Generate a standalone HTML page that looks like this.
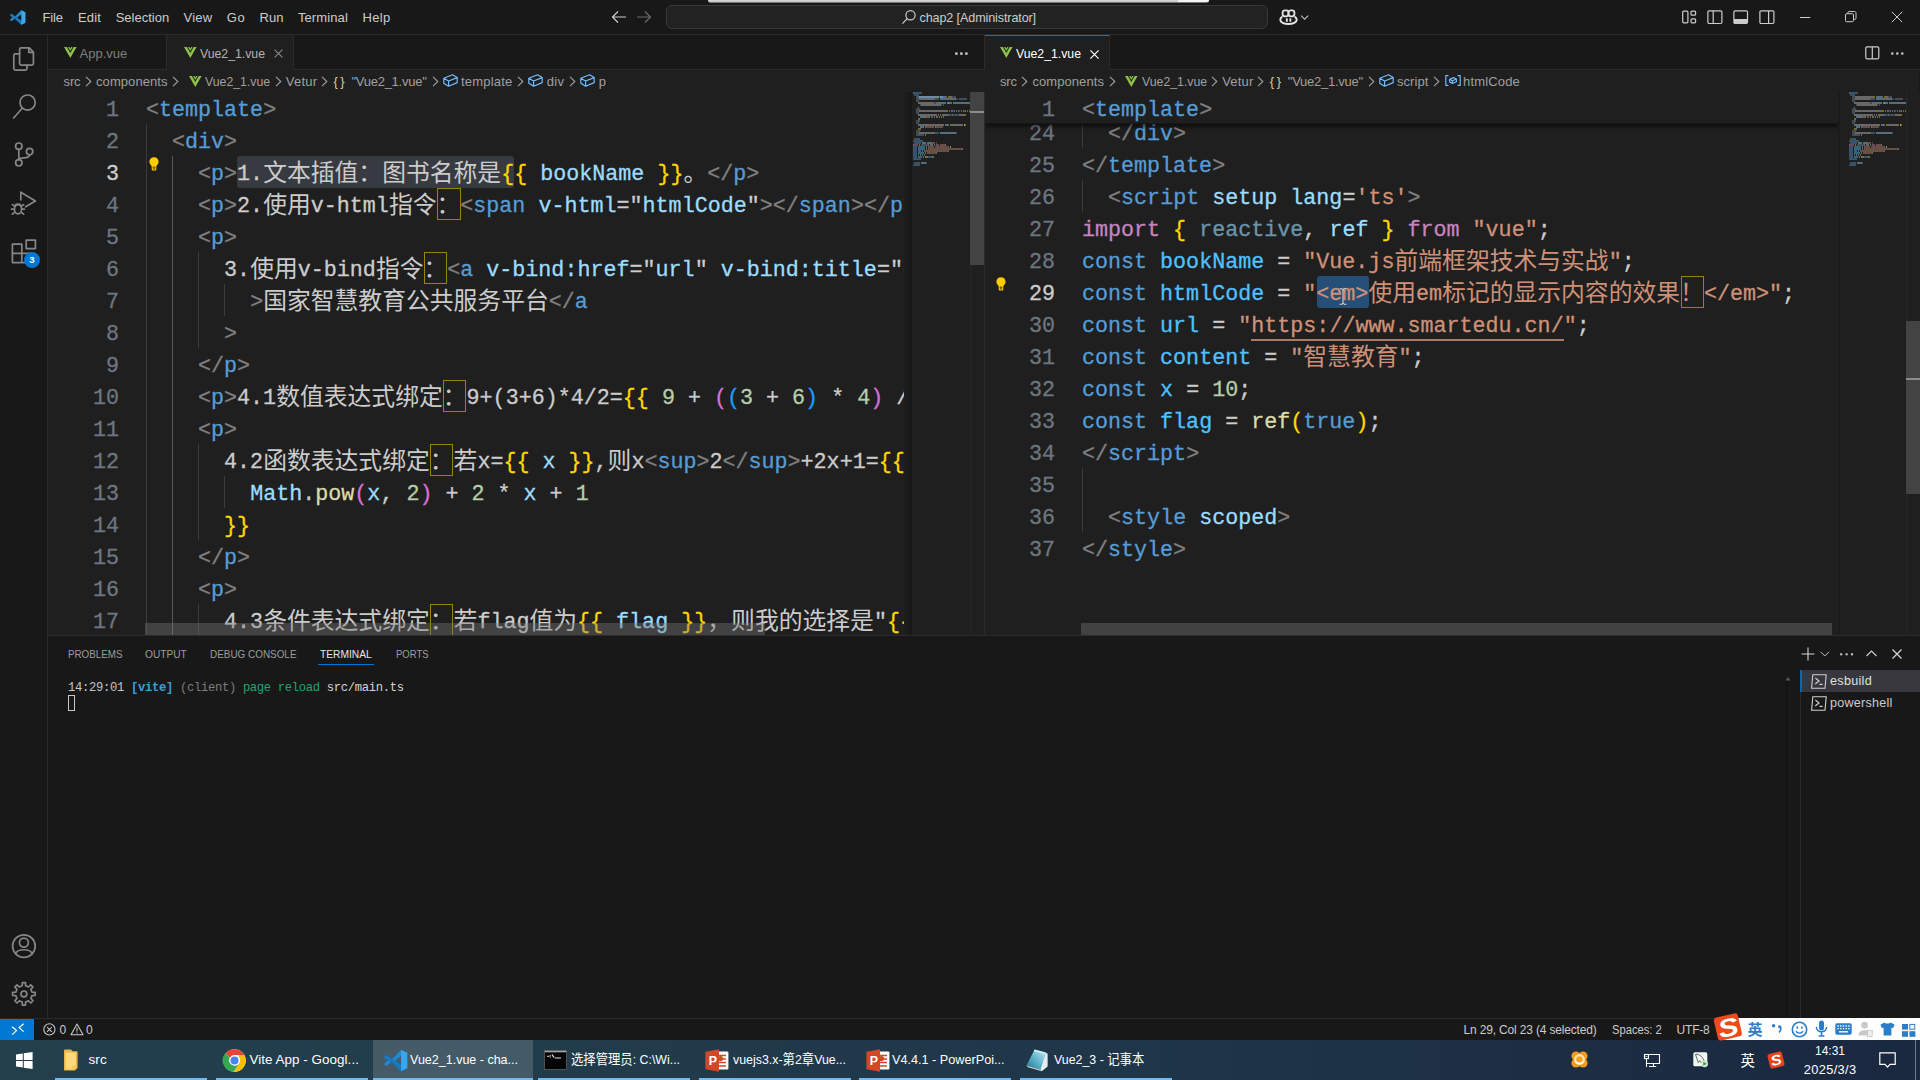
<!DOCTYPE html>
<html lang="zh">
<head>
<meta charset="utf-8">
<title>Vue2_1.vue - chap2 [Administrator] - Visual Studio Code</title>
<style>
*{box-sizing:border-box;margin:0;padding:0}
html,body{width:1920px;height:1080px;overflow:hidden;background:#181818}
body{position:relative;font-family:"Liberation Sans","Noto Sans CJK SC",sans-serif;color:#ccc;font-size:13px}
svg{position:absolute;overflow:visible}
.t{position:absolute;white-space:nowrap;display:block}
/* ---------- title bar ---------- */
#titlebar{position:absolute;left:0;top:0;width:1920px;height:35px;background:#181818;border-bottom:1px solid #2b2b2b}
#titlebar .m{top:0;height:34px;line-height:35px;font-size:13px;color:#ccc}
#cmdcenter{position:absolute;left:666px;top:5px;width:602px;height:24px;border:1px solid #383838;border-radius:6px;background:#222222}
#topstrip{position:absolute;left:708px;top:0;width:501px;height:3px;background:linear-gradient(180deg,#dcdcdc 0,#c4c4c4 55%,#4a4a4a 100%);border-radius:0 0 3px 3px}
/* ---------- activity bar ---------- */
#activity{position:absolute;left:0;top:35px;width:48px;height:983px;background:#181818;border-right:1px solid #2b2b2b}
/* ---------- editor groups ---------- */
.tabs{position:absolute;top:35px;height:35px;background:#181818;border-bottom:1px solid #2b2b2b}
.tab{position:absolute;top:0;height:35px;border-right:1px solid #2b2b2b;border-bottom:1px solid #2b2b2b}
.tab.on{background:#1f1f1f;border-bottom-color:#1f1f1f}
.tab .t{top:1px;height:34px;line-height:35px;font-size:13px}
.crumbs{position:absolute;top:70px;height:22px;background:#1f1f1f;color:#a0a0a0}
.crumbs .t{top:1px;height:22px;line-height:22px;font-size:13px}
.editor{position:absolute;top:92px;height:543px;background:#1f1f1f;overflow:hidden}
.code{position:absolute;left:0;top:0;height:543px;overflow:hidden}
.ln{position:absolute;left:0;height:32px;width:100%}
.ln .n,.ln .c{position:absolute;top:2.5px;-webkit-text-stroke:.3px currentColor;height:32px;line-height:32px;white-space:pre;font-family:"Liberation Mono","Noto Sans CJK SC",monospace;font-size:21.7px}
.ln .n{left:0;text-align:right;color:#6e7681}
.ln .n.cur{color:#ccc}
.ln .c.zh{font-family:"Noto Sans CJK SC","Liberation Mono",sans-serif;font-size:23.8px;top:-1px;-webkit-text-stroke:0}
.g{color:#808080}.b{color:#569cd6}.lb{color:#9cdcfe}.y{color:#ffd700}.p{color:#da70d6}.bl{color:#179fff}
.s{color:#ce9178}.num{color:#b5cea8}.kw{color:#c586c0}.fn{color:#dcdcaa}.w{color:#cccccc}.cn{color:#4fc1ff}.dim{color:#9cdcfe;opacity:.62}
.guide{position:absolute;width:1px;background:#3b3b3b}
.ubox{position:absolute;border:1px solid rgba(189,155,3,.8);height:32px}
.mm{position:absolute;top:0;height:543px;background:#1f1f1f}
.mm i{position:absolute;height:2px;display:block;opacity:.42}
.sb{position:absolute;top:0;width:14px;height:543px;background:#1f1f1f;border-left:1px solid #272727}
/* ---------- panel ---------- */
#panel{position:absolute;left:48px;top:635px;width:1872px;height:383px;background:#181818;border-top:1px solid #2b2b2b}
#panel .pt{top:7px;height:22px;line-height:22px;font-size:11px;color:#9d9d9d}
#panel .term{font-family:"Liberation Mono",monospace;font-size:12.2px;letter-spacing:-0.32px;height:17px;line-height:17px;white-space:pre}
/* ---------- status bar ---------- */
#status{position:absolute;left:0;top:1018px;width:1920px;height:22px;background:#181818;border-top:1px solid #2b2b2b;color:#ccc}
#status .t{top:1px;height:21px;line-height:21px;font-size:12px}
/* ---------- taskbar ---------- */
#taskbar{position:absolute;left:0;top:1040px;width:1920px;height:40px;background:linear-gradient(90deg,#233f4c 0%,#213b4b 35%,#1f3548 60%,#1c2e44 80%,#1a2840 100%);color:#fff}
#taskbar .t{top:0;height:40px;line-height:39px;font-size:13.4px;color:#fff}
#taskbar .ul{position:absolute;top:38px;height:2px;background:#76b9ed}
#ime{position:absolute;left:1720px;top:1018px;width:200px;height:22px;background:#fff}
</style>
</head>
<body>
<div id="titlebar">
  <svg style="left:9px;top:9px" width="17" height="17" viewBox="0 0 100 100"><path fill="#2489ca" d="M5 36 L14 28 L35 44 L72 8 L96 19 V81 L72 92 L35 56 L14 72 L5 64 L20 50 Z"/><path fill="#1070b3" d="M5 36 L14 28 L96 81 L72 92 Z" opacity=".55"/><path fill="#3ba8ec" d="M72 8 L96 19 V81 L72 92 Z"/><path fill="#181818" d="M72 32 V68 L48 50 Z"/></svg>
  <span class="t m" style="left:42.4px;letter-spacing:-0.09px">File</span>
  <span class="t m" style="left:78.1px;letter-spacing:0.10px">Edit</span>
  <span class="t m" style="left:115.7px;letter-spacing:0.00px">Selection</span>
  <span class="t m" style="left:183.5px;letter-spacing:0.26px">View</span>
  <span class="t m" style="left:226.8px;letter-spacing:0.48px">Go</span>
  <span class="t m" style="left:259.6px;letter-spacing:-0.02px">Run</span>
  <span class="t m" style="left:297.9px;letter-spacing:0.11px">Terminal</span>
  <span class="t m" style="left:362.5px;letter-spacing:0.31px">Help</span>
  <!-- nav arrows -->
  <svg style="left:611px;top:10px" width="16" height="14" viewBox="0 0 16 14"><path d="M7 1.5 L1.5 7 L7 12.5 M1.5 7 H15" fill="none" stroke="#ccc" stroke-width="1.2"/></svg>
  <svg style="left:636px;top:10px" width="16" height="14" viewBox="0 0 16 14"><path d="M9 1.5 L14.5 7 L9 12.5 M14.5 7 H1" fill="none" stroke="#6b6b6b" stroke-width="1.2"/></svg>
  <div id="cmdcenter">
    <svg style="left:234px;top:3px" width="16" height="16" viewBox="0 0 16 16"><circle cx="9.5" cy="6.3" r="4.6" fill="none" stroke="#ccc" stroke-width="1.2"/><path d="M6.2 9.6 L1.4 14.6" stroke="#ccc" stroke-width="1.3" fill="none"/></svg>
    <span class="t" style="left:252.5px;top:1px;height:22px;line-height:23px;font-size:12.6px;color:#ccc;letter-spacing:-0.12px">chap2 [Administrator]</span>
  </div>
  <!-- copilot -->
  <svg style="left:1279px;top:9px" width="31" height="17" viewBox="0 0 31 17"><path d="M3.4 7.6 C1.9 8.3 1.3 9.4 1.3 10.8 C1.3 13.4 5 15.1 9.5 15.1 C14 15.1 17.7 13.4 17.7 10.8 C17.7 9.4 17.1 8.3 15.6 7.6" fill="none" stroke="#e4e4e4" stroke-width="2"/><rect x="3.6" y="1.3" width="5.9" height="6" rx="2.3" fill="none" stroke="#e4e4e4" stroke-width="1.8"/><rect x="9.5" y="1.3" width="5.9" height="6" rx="2.3" fill="none" stroke="#e4e4e4" stroke-width="1.8"/><rect x="6.9" y="9.2" width="1.9" height="3.6" rx=".6" fill="#e4e4e4"/><rect x="10.4" y="9.2" width="1.9" height="3.6" rx=".6" fill="#e4e4e4"/><path d="M22 6.6 L25.6 10.2 L29.2 6.6" fill="none" stroke="#b8b8b8" stroke-width="1.2"/></svg>
  <!-- layout controls -->
  <svg style="left:1682px;top:10px" width="16" height="15" viewBox="0 0 16 15"><rect x=".7" y="1.2" width="5.2" height="11.6" rx="1" fill="none" stroke="#ccc" stroke-width="1.2"/><rect x="9" y="1.2" width="4.6" height="4" rx="1" fill="none" stroke="#ccc" stroke-width="1.2"/><rect x="9" y="8.8" width="4.6" height="4" rx="1" fill="none" stroke="#ccc" stroke-width="1.2"/></svg>
  <svg style="left:1707px;top:10px" width="16" height="15" viewBox="0 0 16 15"><rect x=".9" y=".9" width="14" height="12.6" rx="1.2" fill="none" stroke="#ccc" stroke-width="1.2"/><path d="M6.2 1 V13.4" stroke="#ccc" stroke-width="1.2"/></svg>
  <svg style="left:1733px;top:10px" width="16" height="15" viewBox="0 0 16 15"><rect x=".9" y=".9" width="13.6" height="12.6" rx="1.2" fill="none" stroke="#ccc" stroke-width="1.2"/><path d="M1 9 H14.4 V13 H1 Z" fill="#ccc"/></svg>
  <svg style="left:1759px;top:10px" width="16" height="15" viewBox="0 0 16 15"><rect x=".9" y=".9" width="14" height="12.6" rx="1.2" fill="none" stroke="#ccc" stroke-width="1.2"/><path d="M9.6 1 V13.4" stroke="#ccc" stroke-width="1.2"/></svg>
  <!-- window controls -->
  <svg style="left:1800px;top:12px" width="11" height="11" viewBox="0 0 11 11"><path d="M0 5.5 H10.2" stroke="#ccc" stroke-width="1"/></svg>
  <svg style="left:1845px;top:11px" width="12" height="12" viewBox="0 0 12 12"><rect x=".5" y="2.7" width="8" height="8" rx="1.2" fill="none" stroke="#ccc" stroke-width="1"/><path d="M2.8 2.6 V1.8 C2.8 1 3.4 .5 4.2 .5 H9.4 C10.6 .5 11 1.2 11 2.2 V7.2 C11 8 10.4 8.5 9.6 8.5 H8.6" fill="none" stroke="#ccc" stroke-width="1"/></svg>
  <svg style="left:1891px;top:11px" width="12" height="12" viewBox="0 0 12 12"><path d="M.8 .8 L11.2 11.2 M11.2 .8 L.8 11.2" stroke="#ccc" stroke-width="1"/></svg>
  <div id="topstrip"><div style="position:absolute;right:0;top:0;width:31px;height:2px;background:#f4f4f4;border-radius:0 0 3px 0"></div></div>
</div>
<div id="activity">
  <svg style="left:0;top:0" width="48" height="983" viewBox="0 0 48 983" fill="none" stroke="#868686" stroke-width="1.7" stroke-linejoin="round" stroke-linecap="round">
    <!-- explorer -->
    <path d="M19.6 18.8 H15.4 C14.4 18.8 13.8 19.4 13.8 20.4 V33.6 C13.8 34.6 14.4 35.2 15.4 35.2 H25.4 C26.4 35.2 27 34.6 27 33.6 V30.2"/>
    <path d="M21.2 12.8 H29.2 L33.4 17 V28.6 C33.4 29.6 32.8 30.2 31.8 30.2 H21.2 C20.2 30.2 19.6 29.6 19.6 28.6 V14.4 C19.6 13.4 20.2 12.8 21.2 12.8 Z M28.8 13 V17.4 H33.2"/>
    <!-- search -->
    <circle cx="27.6" cy="67.6" r="7.6"/><path d="M22.2 73.2 L13.6 83"/>
    <!-- source control -->
    <circle cx="18.8" cy="111.2" r="3.2"/><circle cx="29.6" cy="116.6" r="3.2"/><circle cx="18.8" cy="127.8" r="3.2"/>
    <path d="M18.8 114.4 V124.6 M29.6 119.8 C29.6 122.6 27 122.8 23.6 122.9 C21 123 19 123.4 18.8 124.6"/>
    <!-- run and debug -->
    <path d="M20.8 164.8 V157.2 L35.4 166 L25.6 171.8"/>
    <ellipse cx="18" cy="174.2" rx="3.6" ry="4.6"/><path d="M15.2 170.6 C15.6 168.6 20.4 168.6 20.8 170.6 M14.4 174.2 H11.6 M21.6 174.2 H24.4 M14.8 171.4 L12.4 169.6 M21.2 171.4 L23.6 169.6 M14.8 177.2 L12.4 179.2 M21.2 177.2 L23.6 179.2"/>
    <!-- extensions -->
    <path d="M12.4 209.2 H21.8 V227.6 H12.4 Z M12.4 218.4 H31 V227.6 H21.8 M26.2 205.2 H35.4 V213.6 H26.2 Z"/>
    <!-- account -->
    <circle cx="23.9" cy="911.1" r="11.3"/><circle cx="23.9" cy="907.6" r="4.5"/><path d="M15.6 918.8 C17.4 913.4 30.4 913.4 32.2 918.8"/>
    <!-- gear -->
    <path d="M22.21 950.77 L22.33 947.61 L25.47 947.61 L25.59 950.77 L28.45 951.96 L30.77 949.80 L33.00 952.03 L30.84 954.35 L32.03 957.21 L35.19 957.33 L35.19 960.47 L32.03 960.59 L30.84 963.45 L33.00 965.77 L30.77 968.00 L28.45 965.84 L25.59 967.03 L25.47 970.19 L22.33 970.19 L22.21 967.03 L19.35 965.84 L17.03 968.00 L14.80 965.77 L16.96 963.45 L15.77 960.59 L12.61 960.47 L12.61 957.33 L15.77 957.21 L16.96 954.35 L14.80 952.03 L17.03 949.80 L19.35 951.96 Z"/><circle cx="23.9" cy="958.9" r="2.9"/>
  </svg>
  <div style="position:absolute;left:24px;top:216.5px;width:16px;height:16px;border-radius:8px;background:#0078d4"></div>
  <span class="t" style="left:24px;top:216.5px;width:16px;height:16px;line-height:16px;text-align:center;font-size:9.5px;font-weight:bold;color:#fff">3</span>
</div>
<div class="tabs" style="left:48px;width:936px">
 <div class="tab" style="left:0;width:119px"><svg style="left:16.2px;top:11.6px" width="12.6" height="11.0" viewBox="0 0 12.6 11"><path fill="#8dc149" d="M0 0 H2.9 L6.3 5.9 L9.7 0 H12.6 L6.3 10.9 Z"/><path fill="#8dc149" d="M4 0 H5.4 L6.3 1.6 L7.2 0 H8.6 L6.3 4 Z"/></svg><span class="t" style="left:31.6px;color:#7e7e7e;letter-spacing:-0.03px">App.vue</span></div>
 <div class="tab on" style="left:119px;width:127px"><svg style="left:16.8px;top:11.6px" width="12.6" height="11.0" viewBox="0 0 12.6 11"><path fill="#8dc149" d="M0 0 H2.9 L6.3 5.9 L9.7 0 H12.6 L6.3 10.9 Z"/><path fill="#8dc149" d="M4 0 H5.4 L6.3 1.6 L7.2 0 H8.6 L6.3 4 Z"/></svg><span class="t" style="left:33.0px;color:#b4b4b4;transform:scaleX(0.9431);transform-origin:0 50%">Vue2_1.vue</span><svg style="left:106.6px;top:14.4px" width="9" height="9" viewBox="0 0 9 9"><path d="M.6 .6 L8.4 8.4 M8.4 .6 L.6 8.4" stroke="#8a8a8a" stroke-width="1.1"/></svg></div>
 <svg style="left:906.6px;top:16.6px" width="14" height="4" viewBox="0 0 14 4"><rect x=".2" y=".4" width="2.4" height="2.4" fill="#d0d0d0"/><rect x="5.2" y=".4" width="2.4" height="2.4" fill="#d0d0d0"/><rect x="10.2" y=".4" width="2.4" height="2.4" fill="#d0d0d0"/></svg>
</div>
<div class="crumbs" style="left:48px;width:936px">
<span class="t" style="left:15.6px;letter-spacing:-0.18px">src</span>
<svg style="left:37px;top:6px" width="7" height="11" viewBox="0 0 7 11"><path d="M1 .8 L5.8 5.5 L1 10.2" fill="none" stroke="#a0a0a0" stroke-width="1.1"/></svg>
<span class="t" style="left:48.0px;letter-spacing:0.08px">components</span>
<svg style="left:124.4px;top:6px" width="7" height="11" viewBox="0 0 7 11"><path d="M1 .8 L5.8 5.5 L1 10.2" fill="none" stroke="#a0a0a0" stroke-width="1.1"/></svg>
<svg style="left:141px;top:6.2px" width="12.6" height="11.0" viewBox="0 0 12.6 11"><path fill="#8dc149" d="M0 0 H2.9 L6.3 5.9 L9.7 0 H12.6 L6.3 10.9 Z"/><path fill="#8dc149" d="M4 0 H5.4 L6.3 1.6 L7.2 0 H8.6 L6.3 4 Z"/></svg>
<span class="t" style="left:157.2px;transform:scaleX(0.9460);transform-origin:0 50%">Vue2_1.vue</span>
<svg style="left:226.6px;top:6px" width="7" height="11" viewBox="0 0 7 11"><path d="M1 .8 L5.8 5.5 L1 10.2" fill="none" stroke="#a0a0a0" stroke-width="1.1"/></svg>
<span class="t" style="left:237.8px;letter-spacing:0.21px">Vetur</span>
<svg style="left:272.8px;top:6px" width="7" height="11" viewBox="0 0 7 11"><path d="M1 .8 L5.8 5.5 L1 10.2" fill="none" stroke="#a0a0a0" stroke-width="1.1"/></svg>
<span class="t" style="left:285.4px;color:#d6cf9a;letter-spacing:2.56px">{}</span>
<span class="t" style="left:303.4px;letter-spacing:-0.25px">"Vue2_1.vue"</span>
<svg style="left:383.8px;top:6px" width="7" height="11" viewBox="0 0 7 11"><path d="M1 .8 L5.8 5.5 L1 10.2" fill="none" stroke="#a0a0a0" stroke-width="1.1"/></svg>
<svg style="left:394.6px;top:4px" width="15" height="13" viewBox="0 0 15 13" fill="none" stroke="#75beff" stroke-width="1.15" stroke-linejoin="round"><path d="M.8 4.2 L9.6 .8 L14.2 3.6 V8.6 L5.6 12.2 L.8 9.2 Z M.8 4.2 L5.6 7 L14.2 3.6 M5.6 7 V12.2"/></svg>
<span class="t" style="left:413.0px;letter-spacing:0.19px">template</span>
<svg style="left:469.4px;top:6px" width="7" height="11" viewBox="0 0 7 11"><path d="M1 .8 L5.8 5.5 L1 10.2" fill="none" stroke="#a0a0a0" stroke-width="1.1"/></svg>
<svg style="left:480.2px;top:4px" width="15" height="13" viewBox="0 0 15 13" fill="none" stroke="#75beff" stroke-width="1.15" stroke-linejoin="round"><path d="M.8 4.2 L9.6 .8 L14.2 3.6 V8.6 L5.6 12.2 L.8 9.2 Z M.8 4.2 L5.6 7 L14.2 3.6 M5.6 7 V12.2"/></svg>
<span class="t" style="left:498.8px;letter-spacing:0.33px">div</span>
<svg style="left:521.4px;top:6px" width="7" height="11" viewBox="0 0 7 11"><path d="M1 .8 L5.8 5.5 L1 10.2" fill="none" stroke="#a0a0a0" stroke-width="1.1"/></svg>
<svg style="left:532.4px;top:4px" width="15" height="13" viewBox="0 0 15 13" fill="none" stroke="#75beff" stroke-width="1.15" stroke-linejoin="round"><path d="M.8 4.2 L9.6 .8 L14.2 3.6 V8.6 L5.6 12.2 L.8 9.2 Z M.8 4.2 L5.6 7 L14.2 3.6 M5.6 7 V12.2"/></svg>
<span class="t" style="left:550.8px;letter-spacing:1.17px">p</span>
</div>
<div style="position:absolute;left:984px;top:35px;width:1px;height:600px;background:#2b2b2b"></div>
<div class="tabs" style="left:985px;width:935px">
 <div class="tab on" style="left:0;width:125px;border-top:1px solid #0078d4"><svg style="left:15px;top:10.8px" width="12.6" height="11.0" viewBox="0 0 12.6 11"><path fill="#8dc149" d="M0 0 H2.9 L6.3 5.9 L9.7 0 H12.6 L6.3 10.9 Z"/><path fill="#8dc149" d="M4 0 H5.4 L6.3 1.6 L7.2 0 H8.6 L6.3 4 Z"/></svg><span class="t" style="left:31.2px;color:#fff;top:0px;transform:scaleX(0.9431);transform-origin:0 50%">Vue2_1.vue</span><svg style="left:105px;top:13.6px" width="9" height="9" viewBox="0 0 9 9"><path d="M.4 .4 L8.6 8.6 M8.6 .4 L.4 8.6" stroke="#fff" stroke-width="1.2"/></svg></div>
 <svg style="left:879.8px;top:10.6px" width="15" height="14" viewBox="0 0 15 14"><rect x=".8" y=".8" width="13" height="12" rx="1.2" fill="none" stroke="#ccc" stroke-width="1.2"/><path d="M7.3 1 V12.8" stroke="#ccc" stroke-width="1.2"/></svg>
 <svg style="left:905.6px;top:16.6px" width="14" height="4" viewBox="0 0 14 4"><rect x=".2" y=".4" width="2.2" height="2.2" fill="#d0d0d0"/><rect x="5.2" y=".4" width="2.2" height="2.2" fill="#d0d0d0"/><rect x="10.2" y=".4" width="2.2" height="2.2" fill="#d0d0d0"/></svg>
</div>
<div class="crumbs" style="left:984.4px;width:935px">
<span class="t" style="left:15.6px;letter-spacing:-0.18px">src</span>
<svg style="left:37px;top:6px" width="7" height="11" viewBox="0 0 7 11"><path d="M1 .8 L5.8 5.5 L1 10.2" fill="none" stroke="#a0a0a0" stroke-width="1.1"/></svg>
<span class="t" style="left:48.0px;letter-spacing:0.08px">components</span>
<svg style="left:124.4px;top:6px" width="7" height="11" viewBox="0 0 7 11"><path d="M1 .8 L5.8 5.5 L1 10.2" fill="none" stroke="#a0a0a0" stroke-width="1.1"/></svg>
<svg style="left:141px;top:6.2px" width="12.6" height="11.0" viewBox="0 0 12.6 11"><path fill="#8dc149" d="M0 0 H2.9 L6.3 5.9 L9.7 0 H12.6 L6.3 10.9 Z"/><path fill="#8dc149" d="M4 0 H5.4 L6.3 1.6 L7.2 0 H8.6 L6.3 4 Z"/></svg>
<span class="t" style="left:157.2px;transform:scaleX(0.9460);transform-origin:0 50%">Vue2_1.vue</span>
<svg style="left:226.6px;top:6px" width="7" height="11" viewBox="0 0 7 11"><path d="M1 .8 L5.8 5.5 L1 10.2" fill="none" stroke="#a0a0a0" stroke-width="1.1"/></svg>
<span class="t" style="left:237.8px;letter-spacing:0.21px">Vetur</span>
<svg style="left:272.8px;top:6px" width="7" height="11" viewBox="0 0 7 11"><path d="M1 .8 L5.8 5.5 L1 10.2" fill="none" stroke="#a0a0a0" stroke-width="1.1"/></svg>
<span class="t" style="left:285.4px;color:#d6cf9a;letter-spacing:2.56px">{}</span>
<span class="t" style="left:303.4px;letter-spacing:-0.25px">"Vue2_1.vue"</span>
<svg style="left:383.8px;top:6px" width="7" height="11" viewBox="0 0 7 11"><path d="M1 .8 L5.8 5.5 L1 10.2" fill="none" stroke="#a0a0a0" stroke-width="1.1"/></svg>
<svg style="left:394.4px;top:4px" width="15" height="13" viewBox="0 0 15 13" fill="none" stroke="#75beff" stroke-width="1.15" stroke-linejoin="round"><path d="M.8 4.2 L9.6 .8 L14.2 3.6 V8.6 L5.6 12.2 L.8 9.2 Z M.8 4.2 L5.6 7 L14.2 3.6 M5.6 7 V12.2"/></svg>
<span class="t" style="left:412.6px;letter-spacing:0.06px">script</span>
<svg style="left:448.8px;top:6px" width="7" height="11" viewBox="0 0 7 11"><path d="M1 .8 L5.8 5.5 L1 10.2" fill="none" stroke="#a0a0a0" stroke-width="1.1"/></svg>
<svg style="left:460.2px;top:4px" width="16" height="13" viewBox="0 0 16 13" fill="none" stroke="#75beff" stroke-width="1.15" stroke-linejoin="round"><path d="M3.4 1.6 H.8 V11.4 H3.4 M12.6 1.6 H15.2 V11.4 H12.6"/><path d="M4.6 5.2 L8.6 3.6 L11.4 5 V7.8 L7.4 9.6 L4.6 8 Z M4.6 5.2 L7.4 6.8 L11.4 5 M7.4 6.8 V9.6"/></svg>
<span class="t" style="left:478.6px;letter-spacing:0.17px">htmlCode</span>
</div>
<div class="editor" style="left:48px;width:936px">
<div class="code" style="width:856px">
<div style="position:absolute;left:189px;top:64px;width:277px;height:32px;background:#373b41;border-radius:3px"></div>
<div class="guide" style="left:98px;top:32px;height:512px;background:#3b3b3b"></div>
<div class="guide" style="left:124px;top:64px;height:480px;background:#5a5a5a"></div>
<div class="guide" style="left:150px;top:160px;height:96px;background:#3b3b3b"></div>
<div class="guide" style="left:150px;top:352px;height:96px;background:#3b3b3b"></div>
<div class="guide" style="left:150px;top:512px;height:32px;background:#3b3b3b"></div>
<div class="guide" style="left:176px;top:192px;height:32px;background:#3b3b3b"></div>
<div class="guide" style="left:176px;top:384px;height:32px;background:#3b3b3b"></div>
<div class="ubox" style="left:389px;top:96px;width:24px"></div>
<div class="ubox" style="left:376px;top:160px;width:23px"></div>
<div class="ubox" style="left:395px;top:288px;width:23px"></div>
<div class="ubox" style="left:382px;top:352px;width:23px"></div>
<div class="ubox" style="left:382px;top:512px;width:23px"></div>
<svg style="left:101px;top:65px" width="10" height="14" viewBox="0 0 10 14"><path fill="#ffcc00" d="M5 .3 C2.3 .3 .4 2.3 .4 4.8 C.4 6.4 1.2 7.4 2 8.3 C2.5 8.9 2.7 9.4 2.7 10 V12.6 C2.7 13.2 3.1 13.6 3.7 13.6 H6.3 C6.9 13.6 7.3 13.2 7.3 12.6 V10 C7.3 9.4 7.5 8.9 8 8.3 C8.8 7.4 9.6 6.4 9.6 4.8 C9.6 2.3 7.7 .3 5 .3 Z"/><path d="M3.6 10.2 H6.4 M3.8 11.9 H6.2" stroke="#1f1f1f" stroke-width=".9"/></svg>
<div class="ln" style="top:0px"><span class="n" style="width:71px">1</span><span class="c g" style="left:98.0px">&lt;</span><span class="c b" style="left:111.0px">template</span><span class="c g" style="left:215.2px">&gt;</span></div>
<div class="ln" style="top:32px"><span class="n" style="width:71px">2</span><span class="c g" style="left:124.0px">&lt;</span><span class="c b" style="left:137.1px">div</span><span class="c g" style="left:176.1px">&gt;</span></div>
<div class="ln" style="top:64px"><span class="n cur" style="width:71px">3</span><span class="c g" style="left:150.1px">&lt;</span><span class="c b" style="left:163.1px">p</span><span class="c g" style="left:176.1px">&gt;</span><span class="c w" style="left:189.1px">1.</span><span class="c zh w" style="left:215.2px">文本插值：图书名称是</span><span class="c y" style="left:453.2px">{{</span><span class="c lb" style="left:492.2px">bookName</span><span class="c y" style="left:609.4px">}}</span><span class="c zh w" style="left:635.5px">。</span><span class="c g" style="left:659.3px">&lt;/</span><span class="c b" style="left:685.3px">p</span><span class="c g" style="left:698.3px">&gt;</span></div>
<div class="ln" style="top:96px"><span class="n" style="width:71px">4</span><span class="c g" style="left:150.1px">&lt;</span><span class="c b" style="left:163.1px">p</span><span class="c g" style="left:176.1px">&gt;</span><span class="c w" style="left:189.1px">2.</span><span class="c zh w" style="left:215.2px">使用</span><span class="c w" style="left:262.8px">v-html</span><span class="c zh w" style="left:340.9px">指令：</span><span class="c g" style="left:412.3px">&lt;</span><span class="c b" style="left:425.3px">span</span><span class="c lb" style="left:490.4px">v-html</span><span class="c w" style="left:568.5px">=</span><span class="c w" style="left:581.6px">&quot;</span><span class="c lb" style="left:594.6px">htmlCode</span><span class="c w" style="left:698.7px">&quot;</span><span class="c g" style="left:711.8px">&gt;</span><span class="c g" style="left:724.8px">&lt;/</span><span class="c b" style="left:750.8px">span</span><span class="c g" style="left:802.9px">&gt;</span><span class="c g" style="left:815.9px">&lt;/</span><span class="c b" style="left:842.0px">p</span><span class="c g" style="left:855.0px">&gt;</span></div>
<div class="ln" style="top:128px"><span class="n" style="width:71px">5</span><span class="c g" style="left:150.1px">&lt;</span><span class="c b" style="left:163.1px">p</span><span class="c g" style="left:176.1px">&gt;</span></div>
<div class="ln" style="top:160px"><span class="n" style="width:71px">6</span><span class="c w" style="left:176.1px">3.</span><span class="c zh w" style="left:202.2px">使用</span><span class="c w" style="left:249.8px">v-bind</span><span class="c zh w" style="left:327.9px">指令：</span><span class="c g" style="left:399.3px">&lt;</span><span class="c b" style="left:412.3px">a</span><span class="c lb" style="left:438.3px">v-bind:href</span><span class="c w" style="left:581.6px">=</span><span class="c w" style="left:594.6px">&quot;</span><span class="c lb" style="left:607.6px">url</span><span class="c w" style="left:646.7px">&quot;</span><span class="c lb" style="left:672.7px">v-bind:title</span><span class="c w" style="left:828.9px">=</span><span class="c w" style="left:842.0px">&quot;</span><span class="c lb" style="left:855.0px">content</span><span class="c w" style="left:946.1px">&quot;</span></div>
<div class="ln" style="top:192px"><span class="n" style="width:71px">7</span><span class="c g" style="left:202.2px">&gt;</span><span class="c zh w" style="left:215.2px">国家智慧教育公共服务平台</span><span class="c g" style="left:500.8px">&lt;/</span><span class="c b" style="left:526.8px">a</span></div>
<div class="ln" style="top:224px"><span class="n" style="width:71px">8</span><span class="c g" style="left:176.1px">&gt;</span></div>
<div class="ln" style="top:256px"><span class="n" style="width:71px">9</span><span class="c g" style="left:150.1px">&lt;/</span><span class="c b" style="left:176.1px">p</span><span class="c g" style="left:189.1px">&gt;</span></div>
<div class="ln" style="top:288px"><span class="n" style="width:71px">10</span><span class="c g" style="left:150.1px">&lt;</span><span class="c b" style="left:163.1px">p</span><span class="c g" style="left:176.1px">&gt;</span><span class="c w" style="left:189.1px">4.1</span><span class="c zh w" style="left:228.2px">数值表达式绑定：</span><span class="c w" style="left:418.6px">9+(3+6)*4/2=</span><span class="c y" style="left:574.8px">{{</span><span class="c num" style="left:613.9px">9</span><span class="c w" style="left:639.9px">+</span><span class="c p" style="left:666.0px">(</span><span class="c bl" style="left:679.0px">(</span><span class="c num" style="left:692.0px">3</span><span class="c w" style="left:718.1px">+</span><span class="c num" style="left:744.1px">6</span><span class="c bl" style="left:757.1px">)</span><span class="c w" style="left:783.2px">*</span><span class="c num" style="left:809.2px">4</span><span class="c p" style="left:822.2px">)</span><span class="c w" style="left:848.3px">/</span><span class="c num" style="left:874.3px">2</span><span class="c y" style="left:900.3px">}}</span></div>
<div class="ln" style="top:320px"><span class="n" style="width:71px">11</span><span class="c g" style="left:150.1px">&lt;</span><span class="c b" style="left:163.1px">p</span><span class="c g" style="left:176.1px">&gt;</span></div>
<div class="ln" style="top:352px"><span class="n" style="width:71px">12</span><span class="c w" style="left:176.1px">4.2</span><span class="c zh w" style="left:215.2px">函数表达式绑定：若</span><span class="c w" style="left:429.4px">x=</span><span class="c y" style="left:455.4px">{{</span><span class="c lb" style="left:494.5px">x</span><span class="c y" style="left:520.5px">}}</span><span class="c w" style="left:546.6px">,</span><span class="c zh w" style="left:559.6px">则</span><span class="c w" style="left:583.4px">x</span><span class="c g" style="left:596.4px">&lt;</span><span class="c b" style="left:609.4px">sup</span><span class="c g" style="left:648.5px">&gt;</span><span class="c w" style="left:661.5px">2</span><span class="c g" style="left:674.5px">&lt;/</span><span class="c b" style="left:700.6px">sup</span><span class="c g" style="left:739.6px">&gt;</span><span class="c w" style="left:752.6px">+2x+1=</span><span class="c y" style="left:830.8px">{{</span></div>
<div class="ln" style="top:384px"><span class="n" style="width:71px">13</span><span class="c lb" style="left:202.2px">Math</span><span class="c w" style="left:254.2px">.</span><span class="c fn" style="left:267.3px">pow</span><span class="c p" style="left:306.3px">(</span><span class="c lb" style="left:319.3px">x</span><span class="c w" style="left:332.4px">,</span><span class="c num" style="left:358.4px">2</span><span class="c p" style="left:371.4px">)</span><span class="c w" style="left:397.5px">+</span><span class="c num" style="left:423.5px">2</span><span class="c w" style="left:449.5px">*</span><span class="c lb" style="left:475.6px">x</span><span class="c w" style="left:501.6px">+</span><span class="c num" style="left:527.7px">1</span></div>
<div class="ln" style="top:416px"><span class="n" style="width:71px">14</span><span class="c y" style="left:176.1px">}}</span></div>
<div class="ln" style="top:448px"><span class="n" style="width:71px">15</span><span class="c g" style="left:150.1px">&lt;/</span><span class="c b" style="left:176.1px">p</span><span class="c g" style="left:189.1px">&gt;</span></div>
<div class="ln" style="top:480px"><span class="n" style="width:71px">16</span><span class="c g" style="left:150.1px">&lt;</span><span class="c b" style="left:163.1px">p</span><span class="c g" style="left:176.1px">&gt;</span></div>
<div class="ln" style="top:512px"><span class="n" style="width:71px">17</span><span class="c w" style="left:176.1px">4.3</span><span class="c zh w" style="left:215.2px">条件表达式绑定：若</span><span class="c w" style="left:429.4px">flag</span><span class="c zh w" style="left:481.5px">值为</span><span class="c y" style="left:529.1px">{{</span><span class="c lb" style="left:568.1px">flag</span><span class="c y" style="left:633.2px">}}</span><span class="c zh w" style="left:659.3px">，则我的选择是</span><span class="c w" style="left:825.9px">&quot;</span><span class="c y" style="left:838.9px">{{</span></div>
<div style="position:absolute;left:97px;top:531px;width:620px;height:12px;background:rgba(121,121,121,.4)"></div>
</div>
<div style="position:absolute;left:856px;top:0;width:8px;height:543px;background:linear-gradient(90deg,rgba(0,0,0,0),rgba(0,0,0,.28))"></div>
<div class="mm" style="left:864px;width:58px"><div style="position:absolute;left:6px;top:4px;width:25px;height:2px;background:#2c5c8f"></div><i style="left:0.5px;top:0px;width:0.9px;background:#808080"></i><i style="left:1.4px;top:0px;width:7.4px;background:#569cd6"></i><i style="left:8.8px;top:0px;width:0.9px;background:#808080"></i><i style="left:2.3px;top:2px;width:0.9px;background:#808080"></i><i style="left:3.3px;top:2px;width:2.8px;background:#569cd6"></i><i style="left:6.0px;top:2px;width:0.9px;background:#808080"></i><i style="left:4.2px;top:4px;width:0.9px;background:#808080"></i><i style="left:5.1px;top:4px;width:0.9px;background:#569cd6"></i><i style="left:6.0px;top:4px;width:0.9px;background:#808080"></i><i style="left:6.9px;top:4px;width:1.8px;background:#cccccc"></i><i style="left:8.8px;top:4px;width:16.6px;background:#cccccc"></i><i style="left:25.3px;top:4px;width:1.8px;background:#ffd700"></i><i style="left:28.1px;top:4px;width:7.4px;background:#9cdcfe"></i><i style="left:36.4px;top:4px;width:1.8px;background:#ffd700"></i><i style="left:38.2px;top:4px;width:1.7px;background:#cccccc"></i><i style="left:39.9px;top:4px;width:1.8px;background:#808080"></i><i style="left:41.7px;top:4px;width:0.9px;background:#569cd6"></i><i style="left:42.6px;top:4px;width:0.9px;background:#808080"></i><i style="left:4.2px;top:6px;width:0.9px;background:#808080"></i><i style="left:5.1px;top:6px;width:0.9px;background:#569cd6"></i><i style="left:6.0px;top:6px;width:0.9px;background:#808080"></i><i style="left:6.9px;top:6px;width:1.8px;background:#cccccc"></i><i style="left:8.8px;top:6px;width:3.3px;background:#cccccc"></i><i style="left:12.1px;top:6px;width:5.5px;background:#cccccc"></i><i style="left:17.6px;top:6px;width:5.0px;background:#cccccc"></i><i style="left:22.6px;top:6px;width:0.9px;background:#808080"></i><i style="left:23.5px;top:6px;width:3.7px;background:#569cd6"></i><i style="left:28.1px;top:6px;width:5.5px;background:#9cdcfe"></i><i style="left:33.6px;top:6px;width:0.9px;background:#cccccc"></i><i style="left:34.5px;top:6px;width:0.9px;background:#cccccc"></i><i style="left:35.5px;top:6px;width:7.4px;background:#9cdcfe"></i><i style="left:42.8px;top:6px;width:0.9px;background:#cccccc"></i><i style="left:43.7px;top:6px;width:0.9px;background:#808080"></i><i style="left:44.7px;top:6px;width:1.8px;background:#808080"></i><i style="left:46.5px;top:6px;width:3.7px;background:#569cd6"></i><i style="left:50.2px;top:6px;width:0.9px;background:#808080"></i><i style="left:51.1px;top:6px;width:1.8px;background:#808080"></i><i style="left:52.9px;top:6px;width:0.9px;background:#569cd6"></i><i style="left:53.9px;top:6px;width:0.9px;background:#808080"></i><i style="left:4.2px;top:8px;width:0.9px;background:#808080"></i><i style="left:5.1px;top:8px;width:0.9px;background:#569cd6"></i><i style="left:6.0px;top:8px;width:0.9px;background:#808080"></i><i style="left:6.0px;top:10px;width:1.8px;background:#cccccc"></i><i style="left:7.9px;top:10px;width:3.3px;background:#cccccc"></i><i style="left:11.2px;top:10px;width:5.5px;background:#cccccc"></i><i style="left:16.7px;top:10px;width:5.0px;background:#cccccc"></i><i style="left:21.7px;top:10px;width:0.9px;background:#808080"></i><i style="left:22.6px;top:10px;width:0.9px;background:#569cd6"></i><i style="left:24.4px;top:10px;width:10.1px;background:#9cdcfe"></i><i style="left:34.5px;top:10px;width:0.9px;background:#cccccc"></i><i style="left:35.5px;top:10px;width:0.9px;background:#cccccc"></i><i style="left:36.4px;top:10px;width:2.8px;background:#9cdcfe"></i><i style="left:39.1px;top:10px;width:0.9px;background:#cccccc"></i><i style="left:41.0px;top:10px;width:11.0px;background:#9cdcfe"></i><i style="left:52.0px;top:10px;width:0.9px;background:#cccccc"></i><i style="left:52.9px;top:10px;width:0.9px;background:#cccccc"></i><i style="left:53.9px;top:10px;width:4.1px;background:#9cdcfe"></i><i style="left:7.9px;top:12px;width:0.9px;background:#808080"></i><i style="left:8.8px;top:12px;width:19.9px;background:#cccccc"></i><i style="left:28.7px;top:12px;width:1.8px;background:#808080"></i><i style="left:30.5px;top:12px;width:0.9px;background:#569cd6"></i><i style="left:6.0px;top:14px;width:0.9px;background:#808080"></i><i style="left:4.2px;top:16px;width:1.8px;background:#808080"></i><i style="left:6.0px;top:16px;width:0.9px;background:#569cd6"></i><i style="left:6.9px;top:16px;width:0.9px;background:#808080"></i><i style="left:4.2px;top:18px;width:0.9px;background:#808080"></i><i style="left:5.1px;top:18px;width:0.9px;background:#569cd6"></i><i style="left:6.0px;top:18px;width:0.9px;background:#808080"></i><i style="left:6.9px;top:18px;width:2.8px;background:#cccccc"></i><i style="left:9.7px;top:18px;width:13.2px;background:#cccccc"></i><i style="left:22.9px;top:18px;width:11.0px;background:#cccccc"></i><i style="left:34.0px;top:18px;width:1.8px;background:#ffd700"></i><i style="left:36.7px;top:18px;width:0.9px;background:#b5cea8"></i><i style="left:38.6px;top:18px;width:0.9px;background:#cccccc"></i><i style="left:40.4px;top:18px;width:0.9px;background:#da70d6"></i><i style="left:41.3px;top:18px;width:0.9px;background:#179fff"></i><i style="left:42.3px;top:18px;width:0.9px;background:#b5cea8"></i><i style="left:44.1px;top:18px;width:0.9px;background:#cccccc"></i><i style="left:45.9px;top:18px;width:0.9px;background:#b5cea8"></i><i style="left:46.9px;top:18px;width:0.9px;background:#179fff"></i><i style="left:48.7px;top:18px;width:0.9px;background:#cccccc"></i><i style="left:50.5px;top:18px;width:0.9px;background:#b5cea8"></i><i style="left:51.5px;top:18px;width:0.9px;background:#da70d6"></i><i style="left:53.3px;top:18px;width:0.9px;background:#cccccc"></i><i style="left:55.1px;top:18px;width:0.9px;background:#b5cea8"></i><i style="left:57.0px;top:18px;width:1.0px;background:#ffd700"></i><i style="left:4.2px;top:20px;width:0.9px;background:#808080"></i><i style="left:5.1px;top:20px;width:0.9px;background:#569cd6"></i><i style="left:6.0px;top:20px;width:0.9px;background:#808080"></i><i style="left:6.0px;top:22px;width:2.8px;background:#cccccc"></i><i style="left:8.8px;top:22px;width:14.9px;background:#cccccc"></i><i style="left:23.7px;top:22px;width:1.8px;background:#cccccc"></i><i style="left:25.5px;top:22px;width:1.8px;background:#ffd700"></i><i style="left:28.3px;top:22px;width:0.9px;background:#9cdcfe"></i><i style="left:30.1px;top:22px;width:1.8px;background:#ffd700"></i><i style="left:32.0px;top:22px;width:0.9px;background:#cccccc"></i><i style="left:32.9px;top:22px;width:1.7px;background:#cccccc"></i><i style="left:34.5px;top:22px;width:0.9px;background:#cccccc"></i><i style="left:35.5px;top:22px;width:0.9px;background:#808080"></i><i style="left:36.4px;top:22px;width:2.8px;background:#569cd6"></i><i style="left:39.1px;top:22px;width:0.9px;background:#808080"></i><i style="left:40.1px;top:22px;width:0.9px;background:#cccccc"></i><i style="left:41.0px;top:22px;width:1.8px;background:#808080"></i><i style="left:42.8px;top:22px;width:2.8px;background:#569cd6"></i><i style="left:45.6px;top:22px;width:0.9px;background:#808080"></i><i style="left:46.5px;top:22px;width:5.5px;background:#cccccc"></i><i style="left:52.0px;top:22px;width:1.8px;background:#ffd700"></i><i style="left:7.9px;top:24px;width:3.7px;background:#9cdcfe"></i><i style="left:11.5px;top:24px;width:0.9px;background:#cccccc"></i><i style="left:12.5px;top:24px;width:2.8px;background:#dcdcaa"></i><i style="left:15.2px;top:24px;width:0.9px;background:#da70d6"></i><i style="left:16.1px;top:24px;width:0.9px;background:#9cdcfe"></i><i style="left:17.1px;top:24px;width:0.9px;background:#cccccc"></i><i style="left:18.9px;top:24px;width:0.9px;background:#b5cea8"></i><i style="left:19.8px;top:24px;width:0.9px;background:#da70d6"></i><i style="left:21.7px;top:24px;width:0.9px;background:#cccccc"></i><i style="left:23.5px;top:24px;width:0.9px;background:#b5cea8"></i><i style="left:25.3px;top:24px;width:0.9px;background:#cccccc"></i><i style="left:27.2px;top:24px;width:0.9px;background:#9cdcfe"></i><i style="left:29.0px;top:24px;width:0.9px;background:#cccccc"></i><i style="left:30.9px;top:24px;width:0.9px;background:#b5cea8"></i><i style="left:6.0px;top:26px;width:1.8px;background:#ffd700"></i><i style="left:4.2px;top:28px;width:1.8px;background:#808080"></i><i style="left:6.0px;top:28px;width:0.9px;background:#569cd6"></i><i style="left:6.9px;top:28px;width:0.9px;background:#808080"></i><i style="left:4.2px;top:30px;width:0.9px;background:#808080"></i><i style="left:5.1px;top:30px;width:0.9px;background:#569cd6"></i><i style="left:6.0px;top:30px;width:0.9px;background:#808080"></i><i style="left:6.0px;top:32px;width:2.8px;background:#cccccc"></i><i style="left:8.8px;top:32px;width:14.9px;background:#cccccc"></i><i style="left:23.7px;top:32px;width:3.7px;background:#cccccc"></i><i style="left:27.4px;top:32px;width:3.3px;background:#cccccc"></i><i style="left:30.7px;top:32px;width:1.8px;background:#ffd700"></i><i style="left:33.4px;top:32px;width:3.7px;background:#9cdcfe"></i><i style="left:38.0px;top:32px;width:1.8px;background:#ffd700"></i><i style="left:39.9px;top:32px;width:11.6px;background:#cccccc"></i><i style="left:51.5px;top:32px;width:0.9px;background:#cccccc"></i><i style="left:52.4px;top:32px;width:1.8px;background:#ffd700"></i><i style="left:7.9px;top:34px;width:3.7px;background:#9cdcfe"></i><i style="left:12.5px;top:34px;width:0.9px;background:#cccccc"></i><i style="left:14.3px;top:34px;width:7.4px;background:#ce9178"></i><i style="left:22.6px;top:34px;width:0.9px;background:#cccccc"></i><i style="left:24.4px;top:34px;width:6.4px;background:#ce9178"></i><i style="left:6.0px;top:36px;width:1.8px;background:#ffd700"></i><i style="left:7.9px;top:36px;width:0.9px;background:#cccccc"></i><i style="left:4.2px;top:38px;width:1.8px;background:#808080"></i><i style="left:6.0px;top:38px;width:0.9px;background:#569cd6"></i><i style="left:6.9px;top:38px;width:0.9px;background:#808080"></i><i style="left:4.2px;top:40px;width:0.9px;background:#808080"></i><i style="left:5.1px;top:40px;width:0.9px;background:#569cd6"></i><i style="left:6.0px;top:40px;width:0.9px;background:#808080"></i><i style="left:6.9px;top:40px;width:1.8px;background:#cccccc"></i><i style="left:8.8px;top:40px;width:3.3px;background:#cccccc"></i><i style="left:12.1px;top:40px;width:5.5px;background:#cccccc"></i><i style="left:17.6px;top:40px;width:5.0px;background:#cccccc"></i><i style="left:22.6px;top:40px;width:0.9px;background:#808080"></i><i style="left:23.5px;top:40px;width:3.7px;background:#569cd6"></i><i style="left:28.1px;top:40px;width:5.5px;background:#9cdcfe"></i><i style="left:33.6px;top:40px;width:0.9px;background:#cccccc"></i><i style="left:34.5px;top:40px;width:9.2px;background:#9cdcfe"></i><i style="left:43.7px;top:40px;width:0.9px;background:#808080"></i><i style="left:4.2px;top:42px;width:1.8px;background:#808080"></i><i style="left:6.0px;top:42px;width:3.7px;background:#569cd6"></i><i style="left:9.7px;top:42px;width:0.9px;background:#808080"></i><i style="left:10.6px;top:42px;width:1.8px;background:#808080"></i><i style="left:12.5px;top:42px;width:0.9px;background:#569cd6"></i><i style="left:13.4px;top:42px;width:0.9px;background:#808080"></i><i style="left:2.3px;top:46px;width:1.8px;background:#808080"></i><i style="left:4.2px;top:46px;width:2.8px;background:#569cd6"></i><i style="left:6.9px;top:46px;width:0.9px;background:#808080"></i><i style="left:0.5px;top:48px;width:1.8px;background:#808080"></i><i style="left:2.3px;top:48px;width:7.4px;background:#569cd6"></i><i style="left:9.7px;top:48px;width:0.9px;background:#808080"></i><i style="left:2.3px;top:50px;width:0.9px;background:#808080"></i><i style="left:3.3px;top:50px;width:5.5px;background:#569cd6"></i><i style="left:9.7px;top:50px;width:4.6px;background:#9cdcfe"></i><i style="left:15.2px;top:50px;width:3.7px;background:#9cdcfe"></i><i style="left:18.9px;top:50px;width:0.9px;background:#cccccc"></i><i style="left:19.8px;top:50px;width:3.7px;background:#ce9178"></i><i style="left:23.5px;top:50px;width:0.9px;background:#808080"></i><i style="left:0.5px;top:52px;width:5.5px;background:#c586c0"></i><i style="left:6.9px;top:52px;width:0.9px;background:#ffd700"></i><i style="left:8.8px;top:52px;width:7.4px;background:#6d97ad"></i><i style="left:16.1px;top:52px;width:0.9px;background:#cccccc"></i><i style="left:18.0px;top:52px;width:2.8px;background:#9cdcfe"></i><i style="left:21.7px;top:52px;width:0.9px;background:#ffd700"></i><i style="left:23.5px;top:52px;width:3.7px;background:#c586c0"></i><i style="left:28.1px;top:52px;width:4.6px;background:#ce9178"></i><i style="left:32.7px;top:52px;width:0.9px;background:#cccccc"></i><i style="left:0.5px;top:54px;width:4.6px;background:#569cd6"></i><i style="left:6.0px;top:54px;width:7.4px;background:#4fc1ff"></i><i style="left:14.3px;top:54px;width:0.9px;background:#cccccc"></i><i style="left:16.1px;top:54px;width:6.4px;background:#ce9178"></i><i style="left:22.6px;top:54px;width:14.9px;background:#ce9178"></i><i style="left:37.5px;top:54px;width:0.9px;background:#ce9178"></i><i style="left:38.4px;top:54px;width:0.9px;background:#cccccc"></i><i style="left:0.5px;top:56px;width:4.6px;background:#569cd6"></i><i style="left:6.0px;top:56px;width:7.4px;background:#4fc1ff"></i><i style="left:14.3px;top:56px;width:0.9px;background:#cccccc"></i><i style="left:16.1px;top:56px;width:4.6px;background:#ce9178"></i><i style="left:20.7px;top:56px;width:3.3px;background:#ce9178"></i><i style="left:24.1px;top:56px;width:1.8px;background:#ce9178"></i><i style="left:25.9px;top:56px;width:18.2px;background:#ce9178"></i><i style="left:44.1px;top:56px;width:5.5px;background:#ce9178"></i><i style="left:49.6px;top:56px;width:0.9px;background:#cccccc"></i><i style="left:0.5px;top:58px;width:4.6px;background:#569cd6"></i><i style="left:6.0px;top:58px;width:2.8px;background:#4fc1ff"></i><i style="left:9.7px;top:58px;width:0.9px;background:#cccccc"></i><i style="left:11.5px;top:58px;width:0.9px;background:#ce9178"></i><i style="left:12.5px;top:58px;width:5.5px;background:#ce9178"></i><i style="left:18.0px;top:58px;width:16.6px;background:#ce9178"></i><i style="left:34.5px;top:58px;width:0.9px;background:#ce9178"></i><i style="left:35.5px;top:58px;width:0.9px;background:#cccccc"></i><i style="left:0.5px;top:60px;width:4.6px;background:#569cd6"></i><i style="left:6.0px;top:60px;width:6.4px;background:#4fc1ff"></i><i style="left:13.4px;top:60px;width:0.9px;background:#cccccc"></i><i style="left:15.2px;top:60px;width:0.9px;background:#ce9178"></i><i style="left:16.1px;top:60px;width:6.6px;background:#ce9178"></i><i style="left:22.8px;top:60px;width:0.9px;background:#ce9178"></i><i style="left:23.7px;top:60px;width:0.9px;background:#cccccc"></i><i style="left:0.5px;top:62px;width:4.6px;background:#569cd6"></i><i style="left:6.0px;top:62px;width:0.9px;background:#4fc1ff"></i><i style="left:7.9px;top:62px;width:0.9px;background:#cccccc"></i><i style="left:9.7px;top:62px;width:1.8px;background:#b5cea8"></i><i style="left:11.5px;top:62px;width:0.9px;background:#cccccc"></i><i style="left:0.5px;top:64px;width:4.6px;background:#569cd6"></i><i style="left:6.0px;top:64px;width:3.7px;background:#4fc1ff"></i><i style="left:10.6px;top:64px;width:0.9px;background:#cccccc"></i><i style="left:12.5px;top:64px;width:2.8px;background:#dcdcaa"></i><i style="left:15.2px;top:64px;width:0.9px;background:#ffd700"></i><i style="left:16.1px;top:64px;width:3.7px;background:#569cd6"></i><i style="left:19.8px;top:64px;width:0.9px;background:#ffd700"></i><i style="left:20.7px;top:64px;width:0.9px;background:#cccccc"></i><i style="left:0.5px;top:66px;width:1.8px;background:#808080"></i><i style="left:2.3px;top:66px;width:5.5px;background:#569cd6"></i><i style="left:7.9px;top:66px;width:0.9px;background:#808080"></i><i style="left:2.3px;top:70px;width:0.9px;background:#808080"></i><i style="left:3.3px;top:70px;width:4.6px;background:#569cd6"></i><i style="left:8.8px;top:70px;width:5.5px;background:#9cdcfe"></i><i style="left:14.3px;top:70px;width:0.9px;background:#808080"></i><i style="left:0.5px;top:72px;width:1.8px;background:#808080"></i><i style="left:2.3px;top:72px;width:4.6px;background:#569cd6"></i><i style="left:6.9px;top:72px;width:0.9px;background:#808080"></i></div>
<div class="sb" style="left:922px"><div style="position:absolute;left:-1px;top:0;width:14px;height:173px;background:#434343"></div><div style="position:absolute;left:-1px;top:19px;width:14px;height:2px;background:#8c8c8c"></div></div>
</div>
<div class="editor" style="left:985px;width:935px">
<div class="code" style="width:853px">
<div class="guide" style="left:97px;top:32px;height:24px"></div>
<div class="guide" style="left:97px;top:88px;height:32px"></div>
<div class="guide" style="left:97px;top:376px;height:64px"></div>
<div style="position:absolute;left:332px;top:184px;width:52px;height:32px;background:#264f78;border-radius:3px"></div>
<div class="ubox" style="left:696px;top:184px;width:23px"></div>
<div style="position:absolute;left:266px;top:247px;width:313px;height:2px;background:#ce9178;opacity:.8"></div>
<svg style="left:11px;top:185px" width="10" height="14" viewBox="0 0 10 14"><path fill="#ffcc00" d="M5 .3 C2.3 .3 .4 2.3 .4 4.8 C.4 6.4 1.2 7.4 2 8.3 C2.5 8.9 2.7 9.4 2.7 10 V12.6 C2.7 13.2 3.1 13.6 3.7 13.6 H6.3 C6.9 13.6 7.3 13.2 7.3 12.6 V10 C7.3 9.4 7.5 8.9 8 8.3 C8.8 7.4 9.6 6.4 9.6 4.8 C9.6 2.3 7.7 .3 5 .3 Z"/><path d="M3.6 10.2 H6.4 M3.8 11.9 H6.2" stroke="#1f1f1f" stroke-width=".9"/></svg>
<div class="ln" style="top:24px"><span class="n" style="width:70px">24</span><span class="c g" style="left:123.0px">&lt;/</span><span class="c b" style="left:149.1px">div</span><span class="c g" style="left:188.1px">&gt;</span></div>
<div class="ln" style="top:56px"><span class="n" style="width:70px">25</span><span class="c g" style="left:97.0px">&lt;/</span><span class="c b" style="left:123.0px">template</span><span class="c g" style="left:227.2px">&gt;</span></div>
<div class="ln" style="top:88px"><span class="n" style="width:70px">26</span><span class="c g" style="left:123.0px">&lt;</span><span class="c b" style="left:136.1px">script</span><span class="c lb" style="left:227.2px">setup</span><span class="c lb" style="left:305.3px">lang</span><span class="c w" style="left:357.4px">=</span><span class="c s" style="left:370.4px">&#x27;ts&#x27;</span><span class="c g" style="left:422.5px">&gt;</span></div>
<div class="ln" style="top:120px"><span class="n" style="width:70px">27</span><span class="c kw" style="left:97.0px">import</span><span class="c y" style="left:188.1px">{</span><span class="c dim" style="left:214.2px">reactive</span><span class="c w" style="left:318.3px">,</span><span class="c lb" style="left:344.4px">ref</span><span class="c y" style="left:396.5px">}</span><span class="c kw" style="left:422.5px">from</span><span class="c s" style="left:487.6px">&quot;vue&quot;</span><span class="c w" style="left:552.7px">;</span></div>
<div class="ln" style="top:152px"><span class="n" style="width:70px">28</span><span class="c b" style="left:97.0px">const</span><span class="c cn" style="left:175.1px">bookName</span><span class="c w" style="left:292.3px">=</span><span class="c s" style="left:318.3px">&quot;Vue.js</span><span class="c zh s" style="left:409.5px">前端框架技术与实战</span><span class="c s" style="left:623.7px">&quot;</span><span class="c w" style="left:636.7px">;</span></div>
<div class="ln" style="top:184px"><span class="n cur" style="width:70px">29</span><span class="c b" style="left:97.0px">const</span><span class="c cn" style="left:175.1px">htmlCode</span><span class="c w" style="left:292.3px">=</span><span class="c s" style="left:318.3px">&quot;&lt;em&gt;</span><span class="c zh s" style="left:383.4px">使用</span><span class="c s" style="left:431.0px">em</span><span class="c zh s" style="left:457.1px">标记的显示内容的效果！</span><span class="c s" style="left:718.9px">&lt;/em&gt;&quot;</span><span class="c w" style="left:797.0px">;</span></div>
<div class="ln" style="top:216px"><span class="n" style="width:70px">30</span><span class="c b" style="left:97.0px">const</span><span class="c cn" style="left:175.1px">url</span><span class="c w" style="left:227.2px">=</span><span class="c s" style="left:253.2px">&quot;</span><span class="c s" style="left:266.3px">https:</span><span class="c s" style="left:344.4px">//www.smartedu.cn/</span><span class="c s" style="left:578.7px">&quot;</span><span class="c w" style="left:591.8px">;</span></div>
<div class="ln" style="top:248px"><span class="n" style="width:70px">31</span><span class="c b" style="left:97.0px">const</span><span class="c cn" style="left:175.1px">content</span><span class="c w" style="left:279.3px">=</span><span class="c s" style="left:305.3px">&quot;</span><span class="c zh s" style="left:318.3px">智慧教育</span><span class="c s" style="left:413.5px">&quot;</span><span class="c w" style="left:426.6px">;</span></div>
<div class="ln" style="top:280px"><span class="n" style="width:70px">32</span><span class="c b" style="left:97.0px">const</span><span class="c cn" style="left:175.1px">x</span><span class="c w" style="left:201.2px">=</span><span class="c num" style="left:227.2px">10</span><span class="c w" style="left:253.2px">;</span></div>
<div class="ln" style="top:312px"><span class="n" style="width:70px">33</span><span class="c b" style="left:97.0px">const</span><span class="c cn" style="left:175.1px">flag</span><span class="c w" style="left:240.2px">=</span><span class="c fn" style="left:266.3px">ref</span><span class="c y" style="left:305.3px">(</span><span class="c b" style="left:318.3px">true</span><span class="c y" style="left:370.4px">)</span><span class="c w" style="left:383.4px">;</span></div>
<div class="ln" style="top:344px"><span class="n" style="width:70px">34</span><span class="c g" style="left:97.0px">&lt;/</span><span class="c b" style="left:123.0px">script</span><span class="c g" style="left:201.2px">&gt;</span></div>
<div class="ln" style="top:376px"><span class="n" style="width:70px">35</span></div>
<div class="ln" style="top:408px"><span class="n" style="width:70px">36</span><span class="c g" style="left:123.0px">&lt;</span><span class="c b" style="left:136.1px">style</span><span class="c lb" style="left:214.2px">scoped</span><span class="c g" style="left:292.3px">&gt;</span></div>
<div class="ln" style="top:440px"><span class="n" style="width:70px">37</span><span class="c g" style="left:97.0px">&lt;/</span><span class="c b" style="left:123.0px">style</span><span class="c g" style="left:188.1px">&gt;</span></div>
<div style="position:absolute;left:0;top:0;width:853px;height:32px;background:#1f1f1f;box-shadow:0 3px 4px rgba(0,0,0,.55);border-bottom:1px solid #161616"><div class="ln" style="top:0"><span class="n" style="width:70px">1</span><span class="c g" style="left:97.0px">&lt;</span><span class="c b" style="left:110.0px">template</span><span class="c g" style="left:214.2px">&gt;</span></div></div>
<div style="position:absolute;left:96px;top:531px;width:751px;height:12px;background:#424242"></div>
<svg style="left:354px;top:195.5px" width="8" height="17" viewBox="0 0 8 17"><path d="M.6 .8 H3 L4 1.6 L5 .8 H7.4 M4 1.6 V15.4 M.6 16.2 H3 L4 15.4 L5 16.2 H7.4" fill="none" stroke="#1f2d3d" stroke-width="2.2" opacity=".55"/><path d="M.6 .8 H3 L4 1.6 L5 .8 H7.4 M4 1.6 V15.4 M.6 16.2 H3 L4 15.4 L5 16.2 H7.4" fill="none" stroke="#f2f2f2" stroke-width="1"/></svg>
</div>
<div style="position:absolute;left:853px;top:0;width:2px;height:543px;background:linear-gradient(90deg,rgba(0,0,0,.0),rgba(0,0,0,.25))"></div>
<div class="mm" style="left:863px;width:58px"><i style="left:0.5px;top:0px;width:0.9px;background:#808080"></i><i style="left:1.4px;top:0px;width:7.4px;background:#569cd6"></i><i style="left:8.8px;top:0px;width:0.9px;background:#808080"></i><i style="left:2.3px;top:2px;width:0.9px;background:#808080"></i><i style="left:3.3px;top:2px;width:2.8px;background:#569cd6"></i><i style="left:6.0px;top:2px;width:0.9px;background:#808080"></i><i style="left:4.2px;top:4px;width:0.9px;background:#808080"></i><i style="left:5.1px;top:4px;width:0.9px;background:#569cd6"></i><i style="left:6.0px;top:4px;width:0.9px;background:#808080"></i><i style="left:6.9px;top:4px;width:1.8px;background:#cccccc"></i><i style="left:8.8px;top:4px;width:16.6px;background:#cccccc"></i><i style="left:25.3px;top:4px;width:1.8px;background:#ffd700"></i><i style="left:28.1px;top:4px;width:7.4px;background:#9cdcfe"></i><i style="left:36.4px;top:4px;width:1.8px;background:#ffd700"></i><i style="left:38.2px;top:4px;width:1.7px;background:#cccccc"></i><i style="left:39.9px;top:4px;width:1.8px;background:#808080"></i><i style="left:41.7px;top:4px;width:0.9px;background:#569cd6"></i><i style="left:42.6px;top:4px;width:0.9px;background:#808080"></i><i style="left:4.2px;top:6px;width:0.9px;background:#808080"></i><i style="left:5.1px;top:6px;width:0.9px;background:#569cd6"></i><i style="left:6.0px;top:6px;width:0.9px;background:#808080"></i><i style="left:6.9px;top:6px;width:1.8px;background:#cccccc"></i><i style="left:8.8px;top:6px;width:3.3px;background:#cccccc"></i><i style="left:12.1px;top:6px;width:5.5px;background:#cccccc"></i><i style="left:17.6px;top:6px;width:5.0px;background:#cccccc"></i><i style="left:22.6px;top:6px;width:0.9px;background:#808080"></i><i style="left:23.5px;top:6px;width:3.7px;background:#569cd6"></i><i style="left:28.1px;top:6px;width:5.5px;background:#9cdcfe"></i><i style="left:33.6px;top:6px;width:0.9px;background:#cccccc"></i><i style="left:34.5px;top:6px;width:0.9px;background:#cccccc"></i><i style="left:35.5px;top:6px;width:7.4px;background:#9cdcfe"></i><i style="left:42.8px;top:6px;width:0.9px;background:#cccccc"></i><i style="left:43.7px;top:6px;width:0.9px;background:#808080"></i><i style="left:44.7px;top:6px;width:1.8px;background:#808080"></i><i style="left:46.5px;top:6px;width:3.7px;background:#569cd6"></i><i style="left:50.2px;top:6px;width:0.9px;background:#808080"></i><i style="left:51.1px;top:6px;width:1.8px;background:#808080"></i><i style="left:52.9px;top:6px;width:0.9px;background:#569cd6"></i><i style="left:53.9px;top:6px;width:0.9px;background:#808080"></i><i style="left:4.2px;top:8px;width:0.9px;background:#808080"></i><i style="left:5.1px;top:8px;width:0.9px;background:#569cd6"></i><i style="left:6.0px;top:8px;width:0.9px;background:#808080"></i><i style="left:6.0px;top:10px;width:1.8px;background:#cccccc"></i><i style="left:7.9px;top:10px;width:3.3px;background:#cccccc"></i><i style="left:11.2px;top:10px;width:5.5px;background:#cccccc"></i><i style="left:16.7px;top:10px;width:5.0px;background:#cccccc"></i><i style="left:21.7px;top:10px;width:0.9px;background:#808080"></i><i style="left:22.6px;top:10px;width:0.9px;background:#569cd6"></i><i style="left:24.4px;top:10px;width:10.1px;background:#9cdcfe"></i><i style="left:34.5px;top:10px;width:0.9px;background:#cccccc"></i><i style="left:35.5px;top:10px;width:0.9px;background:#cccccc"></i><i style="left:36.4px;top:10px;width:2.8px;background:#9cdcfe"></i><i style="left:39.1px;top:10px;width:0.9px;background:#cccccc"></i><i style="left:41.0px;top:10px;width:11.0px;background:#9cdcfe"></i><i style="left:52.0px;top:10px;width:0.9px;background:#cccccc"></i><i style="left:52.9px;top:10px;width:0.9px;background:#cccccc"></i><i style="left:53.9px;top:10px;width:4.1px;background:#9cdcfe"></i><i style="left:7.9px;top:12px;width:0.9px;background:#808080"></i><i style="left:8.8px;top:12px;width:19.9px;background:#cccccc"></i><i style="left:28.7px;top:12px;width:1.8px;background:#808080"></i><i style="left:30.5px;top:12px;width:0.9px;background:#569cd6"></i><i style="left:6.0px;top:14px;width:0.9px;background:#808080"></i><i style="left:4.2px;top:16px;width:1.8px;background:#808080"></i><i style="left:6.0px;top:16px;width:0.9px;background:#569cd6"></i><i style="left:6.9px;top:16px;width:0.9px;background:#808080"></i><i style="left:4.2px;top:18px;width:0.9px;background:#808080"></i><i style="left:5.1px;top:18px;width:0.9px;background:#569cd6"></i><i style="left:6.0px;top:18px;width:0.9px;background:#808080"></i><i style="left:6.9px;top:18px;width:2.8px;background:#cccccc"></i><i style="left:9.7px;top:18px;width:13.2px;background:#cccccc"></i><i style="left:22.9px;top:18px;width:11.0px;background:#cccccc"></i><i style="left:34.0px;top:18px;width:1.8px;background:#ffd700"></i><i style="left:36.7px;top:18px;width:0.9px;background:#b5cea8"></i><i style="left:38.6px;top:18px;width:0.9px;background:#cccccc"></i><i style="left:40.4px;top:18px;width:0.9px;background:#da70d6"></i><i style="left:41.3px;top:18px;width:0.9px;background:#179fff"></i><i style="left:42.3px;top:18px;width:0.9px;background:#b5cea8"></i><i style="left:44.1px;top:18px;width:0.9px;background:#cccccc"></i><i style="left:45.9px;top:18px;width:0.9px;background:#b5cea8"></i><i style="left:46.9px;top:18px;width:0.9px;background:#179fff"></i><i style="left:48.7px;top:18px;width:0.9px;background:#cccccc"></i><i style="left:50.5px;top:18px;width:0.9px;background:#b5cea8"></i><i style="left:51.5px;top:18px;width:0.9px;background:#da70d6"></i><i style="left:53.3px;top:18px;width:0.9px;background:#cccccc"></i><i style="left:55.1px;top:18px;width:0.9px;background:#b5cea8"></i><i style="left:57.0px;top:18px;width:1.0px;background:#ffd700"></i><i style="left:4.2px;top:20px;width:0.9px;background:#808080"></i><i style="left:5.1px;top:20px;width:0.9px;background:#569cd6"></i><i style="left:6.0px;top:20px;width:0.9px;background:#808080"></i><i style="left:6.0px;top:22px;width:2.8px;background:#cccccc"></i><i style="left:8.8px;top:22px;width:14.9px;background:#cccccc"></i><i style="left:23.7px;top:22px;width:1.8px;background:#cccccc"></i><i style="left:25.5px;top:22px;width:1.8px;background:#ffd700"></i><i style="left:28.3px;top:22px;width:0.9px;background:#9cdcfe"></i><i style="left:30.1px;top:22px;width:1.8px;background:#ffd700"></i><i style="left:32.0px;top:22px;width:0.9px;background:#cccccc"></i><i style="left:32.9px;top:22px;width:1.7px;background:#cccccc"></i><i style="left:34.5px;top:22px;width:0.9px;background:#cccccc"></i><i style="left:35.5px;top:22px;width:0.9px;background:#808080"></i><i style="left:36.4px;top:22px;width:2.8px;background:#569cd6"></i><i style="left:39.1px;top:22px;width:0.9px;background:#808080"></i><i style="left:40.1px;top:22px;width:0.9px;background:#cccccc"></i><i style="left:41.0px;top:22px;width:1.8px;background:#808080"></i><i style="left:42.8px;top:22px;width:2.8px;background:#569cd6"></i><i style="left:45.6px;top:22px;width:0.9px;background:#808080"></i><i style="left:46.5px;top:22px;width:5.5px;background:#cccccc"></i><i style="left:52.0px;top:22px;width:1.8px;background:#ffd700"></i><i style="left:7.9px;top:24px;width:3.7px;background:#9cdcfe"></i><i style="left:11.5px;top:24px;width:0.9px;background:#cccccc"></i><i style="left:12.5px;top:24px;width:2.8px;background:#dcdcaa"></i><i style="left:15.2px;top:24px;width:0.9px;background:#da70d6"></i><i style="left:16.1px;top:24px;width:0.9px;background:#9cdcfe"></i><i style="left:17.1px;top:24px;width:0.9px;background:#cccccc"></i><i style="left:18.9px;top:24px;width:0.9px;background:#b5cea8"></i><i style="left:19.8px;top:24px;width:0.9px;background:#da70d6"></i><i style="left:21.7px;top:24px;width:0.9px;background:#cccccc"></i><i style="left:23.5px;top:24px;width:0.9px;background:#b5cea8"></i><i style="left:25.3px;top:24px;width:0.9px;background:#cccccc"></i><i style="left:27.2px;top:24px;width:0.9px;background:#9cdcfe"></i><i style="left:29.0px;top:24px;width:0.9px;background:#cccccc"></i><i style="left:30.9px;top:24px;width:0.9px;background:#b5cea8"></i><i style="left:6.0px;top:26px;width:1.8px;background:#ffd700"></i><i style="left:4.2px;top:28px;width:1.8px;background:#808080"></i><i style="left:6.0px;top:28px;width:0.9px;background:#569cd6"></i><i style="left:6.9px;top:28px;width:0.9px;background:#808080"></i><i style="left:4.2px;top:30px;width:0.9px;background:#808080"></i><i style="left:5.1px;top:30px;width:0.9px;background:#569cd6"></i><i style="left:6.0px;top:30px;width:0.9px;background:#808080"></i><i style="left:6.0px;top:32px;width:2.8px;background:#cccccc"></i><i style="left:8.8px;top:32px;width:14.9px;background:#cccccc"></i><i style="left:23.7px;top:32px;width:3.7px;background:#cccccc"></i><i style="left:27.4px;top:32px;width:3.3px;background:#cccccc"></i><i style="left:30.7px;top:32px;width:1.8px;background:#ffd700"></i><i style="left:33.4px;top:32px;width:3.7px;background:#9cdcfe"></i><i style="left:38.0px;top:32px;width:1.8px;background:#ffd700"></i><i style="left:39.9px;top:32px;width:11.6px;background:#cccccc"></i><i style="left:51.5px;top:32px;width:0.9px;background:#cccccc"></i><i style="left:52.4px;top:32px;width:1.8px;background:#ffd700"></i><i style="left:7.9px;top:34px;width:3.7px;background:#9cdcfe"></i><i style="left:12.5px;top:34px;width:0.9px;background:#cccccc"></i><i style="left:14.3px;top:34px;width:7.4px;background:#ce9178"></i><i style="left:22.6px;top:34px;width:0.9px;background:#cccccc"></i><i style="left:24.4px;top:34px;width:6.4px;background:#ce9178"></i><i style="left:6.0px;top:36px;width:1.8px;background:#ffd700"></i><i style="left:7.9px;top:36px;width:0.9px;background:#cccccc"></i><i style="left:4.2px;top:38px;width:1.8px;background:#808080"></i><i style="left:6.0px;top:38px;width:0.9px;background:#569cd6"></i><i style="left:6.9px;top:38px;width:0.9px;background:#808080"></i><i style="left:4.2px;top:40px;width:0.9px;background:#808080"></i><i style="left:5.1px;top:40px;width:0.9px;background:#569cd6"></i><i style="left:6.0px;top:40px;width:0.9px;background:#808080"></i><i style="left:6.9px;top:40px;width:1.8px;background:#cccccc"></i><i style="left:8.8px;top:40px;width:3.3px;background:#cccccc"></i><i style="left:12.1px;top:40px;width:5.5px;background:#cccccc"></i><i style="left:17.6px;top:40px;width:5.0px;background:#cccccc"></i><i style="left:22.6px;top:40px;width:0.9px;background:#808080"></i><i style="left:23.5px;top:40px;width:3.7px;background:#569cd6"></i><i style="left:28.1px;top:40px;width:5.5px;background:#9cdcfe"></i><i style="left:33.6px;top:40px;width:0.9px;background:#cccccc"></i><i style="left:34.5px;top:40px;width:9.2px;background:#9cdcfe"></i><i style="left:43.7px;top:40px;width:0.9px;background:#808080"></i><i style="left:4.2px;top:42px;width:1.8px;background:#808080"></i><i style="left:6.0px;top:42px;width:3.7px;background:#569cd6"></i><i style="left:9.7px;top:42px;width:0.9px;background:#808080"></i><i style="left:10.6px;top:42px;width:1.8px;background:#808080"></i><i style="left:12.5px;top:42px;width:0.9px;background:#569cd6"></i><i style="left:13.4px;top:42px;width:0.9px;background:#808080"></i><i style="left:2.3px;top:46px;width:1.8px;background:#808080"></i><i style="left:4.2px;top:46px;width:2.8px;background:#569cd6"></i><i style="left:6.9px;top:46px;width:0.9px;background:#808080"></i><i style="left:0.5px;top:48px;width:1.8px;background:#808080"></i><i style="left:2.3px;top:48px;width:7.4px;background:#569cd6"></i><i style="left:9.7px;top:48px;width:0.9px;background:#808080"></i><i style="left:2.3px;top:50px;width:0.9px;background:#808080"></i><i style="left:3.3px;top:50px;width:5.5px;background:#569cd6"></i><i style="left:9.7px;top:50px;width:4.6px;background:#9cdcfe"></i><i style="left:15.2px;top:50px;width:3.7px;background:#9cdcfe"></i><i style="left:18.9px;top:50px;width:0.9px;background:#cccccc"></i><i style="left:19.8px;top:50px;width:3.7px;background:#ce9178"></i><i style="left:23.5px;top:50px;width:0.9px;background:#808080"></i><i style="left:0.5px;top:52px;width:5.5px;background:#c586c0"></i><i style="left:6.9px;top:52px;width:0.9px;background:#ffd700"></i><i style="left:8.8px;top:52px;width:7.4px;background:#6d97ad"></i><i style="left:16.1px;top:52px;width:0.9px;background:#cccccc"></i><i style="left:18.0px;top:52px;width:2.8px;background:#9cdcfe"></i><i style="left:21.7px;top:52px;width:0.9px;background:#ffd700"></i><i style="left:23.5px;top:52px;width:3.7px;background:#c586c0"></i><i style="left:28.1px;top:52px;width:4.6px;background:#ce9178"></i><i style="left:32.7px;top:52px;width:0.9px;background:#cccccc"></i><i style="left:0.5px;top:54px;width:4.6px;background:#569cd6"></i><i style="left:6.0px;top:54px;width:7.4px;background:#4fc1ff"></i><i style="left:14.3px;top:54px;width:0.9px;background:#cccccc"></i><i style="left:16.1px;top:54px;width:6.4px;background:#ce9178"></i><i style="left:22.6px;top:54px;width:14.9px;background:#ce9178"></i><i style="left:37.5px;top:54px;width:0.9px;background:#ce9178"></i><i style="left:38.4px;top:54px;width:0.9px;background:#cccccc"></i><i style="left:0.5px;top:56px;width:4.6px;background:#569cd6"></i><i style="left:6.0px;top:56px;width:7.4px;background:#4fc1ff"></i><i style="left:14.3px;top:56px;width:0.9px;background:#cccccc"></i><i style="left:16.1px;top:56px;width:4.6px;background:#ce9178"></i><i style="left:20.7px;top:56px;width:3.3px;background:#ce9178"></i><i style="left:24.1px;top:56px;width:1.8px;background:#ce9178"></i><i style="left:25.9px;top:56px;width:18.2px;background:#ce9178"></i><i style="left:44.1px;top:56px;width:5.5px;background:#ce9178"></i><i style="left:49.6px;top:56px;width:0.9px;background:#cccccc"></i><i style="left:0.5px;top:58px;width:4.6px;background:#569cd6"></i><i style="left:6.0px;top:58px;width:2.8px;background:#4fc1ff"></i><i style="left:9.7px;top:58px;width:0.9px;background:#cccccc"></i><i style="left:11.5px;top:58px;width:0.9px;background:#ce9178"></i><i style="left:12.5px;top:58px;width:5.5px;background:#ce9178"></i><i style="left:18.0px;top:58px;width:16.6px;background:#ce9178"></i><i style="left:34.5px;top:58px;width:0.9px;background:#ce9178"></i><i style="left:35.5px;top:58px;width:0.9px;background:#cccccc"></i><i style="left:0.5px;top:60px;width:4.6px;background:#569cd6"></i><i style="left:6.0px;top:60px;width:6.4px;background:#4fc1ff"></i><i style="left:13.4px;top:60px;width:0.9px;background:#cccccc"></i><i style="left:15.2px;top:60px;width:0.9px;background:#ce9178"></i><i style="left:16.1px;top:60px;width:6.6px;background:#ce9178"></i><i style="left:22.8px;top:60px;width:0.9px;background:#ce9178"></i><i style="left:23.7px;top:60px;width:0.9px;background:#cccccc"></i><i style="left:0.5px;top:62px;width:4.6px;background:#569cd6"></i><i style="left:6.0px;top:62px;width:0.9px;background:#4fc1ff"></i><i style="left:7.9px;top:62px;width:0.9px;background:#cccccc"></i><i style="left:9.7px;top:62px;width:1.8px;background:#b5cea8"></i><i style="left:11.5px;top:62px;width:0.9px;background:#cccccc"></i><i style="left:0.5px;top:64px;width:4.6px;background:#569cd6"></i><i style="left:6.0px;top:64px;width:3.7px;background:#4fc1ff"></i><i style="left:10.6px;top:64px;width:0.9px;background:#cccccc"></i><i style="left:12.5px;top:64px;width:2.8px;background:#dcdcaa"></i><i style="left:15.2px;top:64px;width:0.9px;background:#ffd700"></i><i style="left:16.1px;top:64px;width:3.7px;background:#569cd6"></i><i style="left:19.8px;top:64px;width:0.9px;background:#ffd700"></i><i style="left:20.7px;top:64px;width:0.9px;background:#cccccc"></i><i style="left:0.5px;top:66px;width:1.8px;background:#808080"></i><i style="left:2.3px;top:66px;width:5.5px;background:#569cd6"></i><i style="left:7.9px;top:66px;width:0.9px;background:#808080"></i><i style="left:2.3px;top:70px;width:0.9px;background:#808080"></i><i style="left:3.3px;top:70px;width:4.6px;background:#569cd6"></i><i style="left:8.8px;top:70px;width:5.5px;background:#9cdcfe"></i><i style="left:14.3px;top:70px;width:0.9px;background:#808080"></i><i style="left:0.5px;top:72px;width:1.8px;background:#808080"></i><i style="left:2.3px;top:72px;width:4.6px;background:#569cd6"></i><i style="left:6.9px;top:72px;width:0.9px;background:#808080"></i></div>
<div class="sb" style="left:921px"><div style="position:absolute;left:-1px;top:229px;width:14px;height:173px;background:#434343"></div><div style="position:absolute;left:-1px;top:286px;width:14px;height:2px;background:#8c8c8c"></div></div>
</div>
<div id="panel">
  <span class="t pt" style="left:19.6px;transform:scaleX(0.8914);transform-origin:0 50%">PROBLEMS</span>
  <span class="t pt" style="left:97.4px;transform:scaleX(0.9219);transform-origin:0 50%">OUTPUT</span>
  <span class="t pt" style="left:162.4px;transform:scaleX(0.9013);transform-origin:0 50%">DEBUG CONSOLE</span>
  <span class="t pt" style="left:272.4px;color:#e7e7e7;transform:scaleX(0.9294);transform-origin:0 50%">TERMINAL</span>
  <div style="position:absolute;left:270px;top:28px;width:56px;height:1px;background:#0078d4"></div>
  <span class="t pt" style="left:347.6px;transform:scaleX(0.8620);transform-origin:0 50%">PORTS</span>
  <!-- terminal text -->
  <span class="t term" style="left:20px;top:43.5px;color:#c5c5c5">14:29:01 <b style="color:#3a9fd8">[vite]</b> <span style="color:#7d7d7d">(client)</span> <span style="color:#1fa672">page reload</span> <span style="color:#d4d4d4">src/main.ts</span></span>
  <div style="position:absolute;left:20px;top:59px;width:7px;height:16px;border:1px solid #c8c8c8"></div>
  <!-- panel actions -->
  <svg style="left:1753px;top:11px" width="14" height="14" viewBox="0 0 14 14"><path d="M7 .6 V13.4 M.6 7 H13.4" stroke="#d6d6d6" stroke-width="1.1"/></svg>
  <svg style="left:1771.6px;top:15px" width="10" height="6" viewBox="0 0 10 6"><path d="M.6 .8 L4.8 5 L9 .8" fill="none" stroke="#c0c0c0" stroke-width="1"/></svg>
  <svg style="left:1791.6px;top:17px" width="14" height="3" viewBox="0 0 14 3"><rect x=".2" y=".3" width="2" height="2" fill="#d0d0d0"/><rect x="5.6" y=".3" width="2" height="2" fill="#d0d0d0"/><rect x="11" y=".3" width="2" height="2" fill="#d0d0d0"/></svg>
  <svg style="left:1817.6px;top:13.6px" width="11" height="7" viewBox="0 0 11 7"><path d="M.5 6 L5.5 1 L10.5 6" fill="none" stroke="#d0d0d0" stroke-width="1.1"/></svg>
  <svg style="left:1844px;top:12.6px" width="10" height="10" viewBox="0 0 10 10"><path d="M.5 .5 L9.5 9.5 M9.5 .5 L.5 9.5" stroke="#d6d6d6" stroke-width="1.2"/></svg>
  <!-- terminal scrollbar gutter -->
  <div style="position:absolute;left:1738px;top:42px;width:1px;height:341px;background:#101010"></div>
  <svg style="left:1737px;top:40px" width="6" height="5" viewBox="0 0 6 5"><path d="M.5 4.5 L3 1 L5.5 4.5 Z" fill="#5a5a5a"/></svg>
  <!-- tabs list -->
  <div style="position:absolute;left:1752px;top:34px;width:1px;height:349px;background:#2b2b2b"></div>
  <div style="position:absolute;left:1753px;top:34px;width:119px;height:22px;background:#37373d"></div>
  <div style="position:absolute;left:1752px;top:34px;width:2px;height:22px;background:#0b66b0"></div>
  <svg style="left:1763px;top:37.6px" width="16" height="15" viewBox="0 0 16 15" fill="none" stroke="#cfcfcf" stroke-width="1.1"><path d="M1.8 .8 H15.2 L14 14.2 H.6 Z"/><path d="M4.4 4 L8 7 L4.2 10 M8.4 10.4 H11.6" stroke-width="1.2"/></svg>
  <svg style="left:1763px;top:59.6px" width="16" height="15" viewBox="0 0 16 15" fill="none" stroke="#cfcfcf" stroke-width="1.1"><path d="M1.8 .8 H15.2 L14 14.2 H.6 Z"/><path d="M4.4 4 L8 7 L4.2 10 M8.4 10.4 H11.6" stroke-width="1.2"/></svg>
  <span class="t" style="left:1782px;top:34px;height:22px;line-height:23.4px;font-size:12.6px;color:#e0e0e0;letter-spacing:0.30px">esbuild</span>
  <span class="t" style="left:1782px;top:56px;height:22px;line-height:23.4px;font-size:12.6px;color:#ccc;letter-spacing:0.24px">powershell</span>
</div>
<div id="status">
  <div style="position:absolute;left:0;top:0;width:34px;height:21px;background:#0078d4"></div>
  <svg style="left:10.6px;top:4px" width="14" height="13" viewBox="0 0 14 13"><path d="M1.2 3.8 L5.6 7.6 L1.2 11.6 M12.6 .8 L8.2 4.6 L12.6 8.6" fill="none" stroke="#fff" stroke-width="1.2"/></svg>
  <svg style="left:42.6px;top:4px" width="13" height="13" viewBox="0 0 13 13"><circle cx="6.4" cy="6.4" r="5.6" fill="none" stroke="#ccc" stroke-width="1.05"/><path d="M4 4 L8.8 8.8 M8.8 4 L4 8.8" stroke="#ccc" stroke-width="1.05"/></svg>
  <span class="t" style="left:59.4px;letter-spacing:0.11px">0</span>
  <svg style="left:69.6px;top:4px" width="14" height="13" viewBox="0 0 14 13"><path d="M7 1 L13 11.8 H1 Z" fill="none" stroke="#ccc" stroke-width="1.05" stroke-linejoin="round"/><path d="M7 4.6 V8.4 M7 9.4 V10.6" stroke="#ccc" stroke-width="1.05"/></svg>
  <span class="t" style="left:86px;letter-spacing:0.11px">0</span>
  <span class="t" style="left:1463.6px;letter-spacing:-0.17px">Ln 29, Col 23 (4 selected)</span>
  <span class="t" style="left:1611.6px;transform:scaleX(0.9330);transform-origin:0 50%">Spaces: 2</span>
  <span class="t" style="left:1676.6px;letter-spacing:-0.20px">UTF-8</span>
</div>
<div id="taskbar">
  <!-- start -->
  <svg style="left:16px;top:11.6px" width="17" height="17" viewBox="0 0 17 17"><path fill="#fff" d="M0 2.4 L6.8 1.4 V8 H0 Z M7.8 1.3 L16.6 0 V8 H7.8 Z M0 9 H6.8 V15.6 L0 14.6 Z M7.8 9 H16.6 V17 L7.8 15.7 Z"/></svg>
  <!-- src -->
  <svg style="left:63px;top:9px" width="16" height="22" viewBox="0 0 16 22"><path fill="#e8b64a" d="M1 1.6 C1 .8 1.4 .4 2.2 .4 H8 L9.6 2.2 H13.4 C14.2 2.2 14.6 2.6 14.6 3.4 V19 L12 21.6 H2.2 C1.4 21.6 1 21.2 1 20.4 Z"/><path fill="#ffd978" d="M2.6 3.6 H13 V18.2 L10.6 20.4 H2.6 Z"/><path fill="#f3c653" d="M9.4 16.6 H13 L10.6 20.4 H9.4 Z"/></svg>
  <span class="t" style="left:88.4px;letter-spacing:0.18px">src</span>
  <div class="ul" style="left:55px;width:152px"></div>
  <!-- chrome -->
  <svg style="left:222.6px;top:8.8px" width="23" height="23" viewBox="0 0 23 23"><circle cx="11.5" cy="11.5" r="11.2" fill="#fff"/><path fill="#ea4335" d="M11.5 .3 A11.2 11.2 0 0 1 21.2 5.9 H11.5 A5.6 5.6 0 0 0 6.65 8.7 L2.6 3.9 A11.2 11.2 0 0 1 11.5 .3 Z"/><path fill="#fbbc04" d="M21.2 5.9 A11.2 11.2 0 0 1 10.6 22.66 L15.7 14.9 A5.6 5.6 0 0 0 16.35 8.7 L15.2 5.9 Z"/><path fill="#34a853" d="M2.6 3.9 L6.65 8.7 A5.6 5.6 0 0 0 15.7 14.9 L10.6 22.66 A11.2 11.2 0 0 1 2.6 3.9 Z"/><circle cx="11.5" cy="11.5" r="5" fill="#fff"/><circle cx="11.5" cy="11.5" r="4" fill="#4285f4"/></svg>
  <span class="t" style="left:249.4px;letter-spacing:0.06px">Vite App - Googl...</span>
  <div class="ul" style="left:216px;width:152px"></div>
  <!-- vscode active -->
  <div style="position:absolute;left:373px;top:0;width:160px;height:40px;background:rgba(255,255,255,.16)"></div>
  <svg style="left:383px;top:8px" width="25" height="25" viewBox="0 0 100 100"><path fill="#1f8ad2" d="M4 36 L13 28 L35 45 L72 8 L97 19 V81 L72 92 L35 55 L13 72 L4 64 L20 50 Z"/><path fill="#0f6fb5" d="M4 36 L13 28 L97 81 L72 92 Z" opacity=".6"/><path fill="#37a6ee" d="M72 8 L97 19 V81 L72 92 Z"/><path fill="#3e5c6c" d="M72 33 V67 L49 50 Z"/></svg>
  <span class="t" style="left:410px;transform:scaleX(0.9339);transform-origin:0 50%">Vue2_1.vue - cha...</span>
  <div class="ul" style="left:373px;width:160px"></div>
  <!-- cmd -->
  <svg style="left:544px;top:9.6px" width="23" height="20" viewBox="0 0 23 20"><rect x=".4" y=".4" width="22.2" height="19.2" fill="#050505" stroke="#6a6a6a" stroke-width=".7"/><rect x=".8" y=".8" width="21.4" height="1.5" fill="#a8a8a8"/><path d="M3 6.2 H5.4 M6.4 5 V5.8 M6.4 6.6 V7.4 M8 4.6 L10.2 7.6 M11 8 H17" stroke="#e6e6e6" stroke-width="1.1"/></svg>
  <span class="t" style="left:571px;transform:scaleX(0.9215);transform-origin:0 50%">选择管理员: C:\Wi...</span>
  <div class="ul" style="left:538px;width:152px"></div>
  <!-- ppt 1 -->
  <svg style="left:705px;top:8.6px" width="24" height="23" viewBox="0 0 24 23"><rect x="9" y="2.6" width="14.4" height="17.8" rx="1" fill="#fff"/><path d="M14 6.4 H21 M14 10 H21 M14 13.6 H21 M14 17 H21" stroke="#d24726" stroke-width="1.5"/><circle cx="15.4" cy="9.6" r="2.6" fill="#d24726"/><path fill="#d24726" d="M.4 2.8 L14 .2 V22.8 L.4 20.2 Z"/><text x="3.8" y="15.6" font-family="Liberation Sans,sans-serif" font-weight="bold" font-size="12.4" fill="#fff">P</text></svg>
  <span class="t" style="left:732.6px;transform:scaleX(0.9239);transform-origin:0 50%">vuejs3.x-第2章Vue...</span>
  <div class="ul" style="left:699px;width:152px"></div>
  <!-- ppt 2 -->
  <svg style="left:865.6px;top:8.6px" width="24" height="23" viewBox="0 0 24 23"><rect x="9" y="2.6" width="14.4" height="17.8" rx="1" fill="#fff"/><path d="M14 6.4 H21 M14 10 H21 M14 13.6 H21 M14 17 H21" stroke="#d24726" stroke-width="1.5"/><circle cx="15.4" cy="9.6" r="2.6" fill="#d24726"/><path fill="#d24726" d="M.4 2.8 L14 .2 V22.8 L.4 20.2 Z"/><text x="3.8" y="15.6" font-family="Liberation Sans,sans-serif" font-weight="bold" font-size="12.4" fill="#fff">P</text></svg>
  <span class="t" style="left:892px;transform:scaleX(0.9455);transform-origin:0 50%">V4.4.1 - PowerPoi...</span>
  <div class="ul" style="left:859px;width:152px"></div>
  <!-- notepad -->
  <svg style="left:1026px;top:8.6px" width="23" height="23" viewBox="0 0 23 23"><defs><linearGradient id="np" x1="0" y1="1" x2="1" y2="0"><stop offset="0" stop-color="#1f7282"/><stop offset=".45" stop-color="#58b0c8"/><stop offset="1" stop-color="#c4e8f6"/></linearGradient></defs><path d="M19.6 3.4 L21.6 4.8 L21.6 17.4 L15.8 22.2 L14.2 20.6 Z" fill="#e6edf0"/><path d="M8.6 .6 L19.8 3.4 L14.4 20.8 L.4 16.6 Z" fill="url(#np)"/><path d="M8.6 .6 L19.8 3.4 L19.2 5.2 L8 2.4 Z" fill="#d8f0f8" opacity=".8"/><path d="M.4 16.6 L14.4 20.8 L15.8 22.2 L2 18.2 Z" fill="#cfd8dc"/></svg>
  <span class="t" style="left:1054.4px;transform:scaleX(0.9248);transform-origin:0 50%">Vue2_3 - 记事本</span>
  <div class="ul" style="left:1020px;width:152px"></div>
  <!-- tray -->
  <svg style="left:1571.4px;top:11px" width="17" height="17" viewBox="0 0 17 17"><circle cx="5" cy="5" r="4.6" fill="#f29a1c"/><circle cx="12" cy="5" r="4.6" fill="#f29a1c"/><circle cx="5" cy="12" r="4.6" fill="#f29a1c"/><circle cx="12" cy="12" r="4.6" fill="#f29a1c"/><circle cx="8.5" cy="8.5" r="5.4" fill="#ffe6b8"/><circle cx="8.5" cy="8.5" r="3.3" fill="#f7a21f"/><path d="M4.6 10.6 C6 13 11 13 12.4 10.6" fill="none" stroke="#fff" stroke-width="1.3"/></svg>
  <svg style="left:1643px;top:13px" width="18" height="16" viewBox="0 0 18 16" fill="none" stroke="#fff" stroke-width="1.1"><path d="M5.5 1.5 H16.5 V10.5 H3.5 M10.5 10.5 V13.5 M6 13.5 H13.2 M3.5 5.5 V14"/><rect x="1.5" y="1.5" width="4" height="4" fill="#1d3046"/><path d="M2.6 3 L3.5 4 L4.4 3" stroke-width=".8"/></svg>
  <svg style="left:1692.6px;top:12.4px" width="16" height="16" viewBox="0 0 16 16"><rect x=".3" y=".3" width="14" height="14" rx="1.6" fill="#f4f6f4"/><path d="M2.6 2.2 C6.4 2 10 5 11.4 9.6 M2.6 2.2 C3 5 4.4 7 5.2 10.6 L6.6 8.6 L8.6 11" fill="none" stroke="#5a6a62" stroke-width="1"/><circle cx="11.6" cy="11.8" r="3.4" fill="#cfe8cf"/><path d="M10.3 9.8 L13.8 11.8 L10.3 13.8 Z" fill="#3fa34a"/></svg>
  <span class="t" style="left:1740.4px;font-size:14.4px;line-height:42px">英</span>
  <svg style="left:1767px;top:11px" width="18" height="18" viewBox="0 0 18 18"><g transform="rotate(-14 9 9)"><rect x="1.6" y="1.6" width="14.8" height="14.8" rx="2.2" fill="#e8421a"/><text x="9" y="14.2" text-anchor="middle" font-family="Liberation Sans,sans-serif" font-weight="bold" font-style="italic" font-size="14.5" fill="#fff" transform="translate(9 0) scale(1.12 1) translate(-9 0)">S</text></g></svg>
  <span class="t" style="left:1815.4px;font-size:12.8px;line-height:21px;height:21px;transform:scaleX(0.9366);transform-origin:0 50%">14:31</span>
  <span class="t" style="left:1803.8px;top:19px;font-size:12.8px;line-height:21px;height:21px;letter-spacing:0.35px">2025/3/3</span>
  <svg style="left:1878.6px;top:11.8px" width="17" height="17" viewBox="0 0 17 17"><path d="M.8 .8 H16.2 V12.4 H11 L8.5 15.2 L6 12.4 H.8 Z" fill="none" stroke="#fff" stroke-width="1.2"/></svg>
  <div style="position:absolute;left:1915px;top:0;width:1px;height:40px;background:#6f7c88"></div>
</div>
<div id="ime">
  <span class="t" style="left:27.4px;top:0;height:22px;line-height:22px;font-size:15px;font-weight:bold;color:#2b7cc9;font-family:'Noto Sans CJK SC',sans-serif">英</span>
  <svg style="left:51.0px;top:5px" width="12" height="13" viewBox="0 0 12 13"><circle cx="2.6" cy="2.8" r="1.7" fill="#2b7cc9"/><path d="M8.6 3.4 C10.4 3.8 10.4 7.4 8 9.4" fill="none" stroke="#2b7cc9" stroke-width="1.7"/><circle cx="8.6" cy="3.8" r="1.5" fill="#2b7cc9"/></svg>
  <svg style="left:70.6px;top:2.6px" width="17" height="17" viewBox="0 0 17 17"><circle cx="8.5" cy="8.5" r="7.2" fill="none" stroke="#2b7cc9" stroke-width="1.6"/><path d="M6.2 5.4 V7.8 M10.8 5.4 V7.8" stroke="#2b7cc9" stroke-width="1.5"/><path d="M5 10 C6 12.8 11 12.8 12 10" fill="none" stroke="#2b7cc9" stroke-width="1.4"/></svg>
  <svg style="left:94.6px;top:2.4px" width="13" height="18" viewBox="0 0 13 18"><rect x="4" y=".4" width="5" height="10" rx="2.5" fill="#2b7cc9"/><path d="M1.4 7 C1.4 13.4 11.6 13.4 11.6 7 M6.5 12 V15.6 M3.6 16 H9.4" fill="none" stroke="#2b7cc9" stroke-width="1.5"/></svg>
  <svg style="left:115.0px;top:5px" width="17" height="12" viewBox="0 0 17 12"><rect x=".3" y=".3" width="16.4" height="11.4" rx="1.6" fill="#2b7cc9"/><path d="M2.4 3 H14.6 M2.4 5.6 H14.6" stroke="#fff" stroke-width="1.3" stroke-dasharray="1.4 1.3"/><path d="M4 8.8 H13" stroke="#fff" stroke-width="1.4"/></svg>
  <svg style="left:138.4px;top:3px" width="15" height="17" viewBox="0 0 15 17"><circle cx="6.6" cy="4.2" r="3.4" fill="#c9c9c9"/><path d="M.4 14.4 C.4 7.6 12.8 7.6 12.8 14.4 Z" fill="#c9c9c9"/><rect x="9.4" y="9.6" width="4.8" height="6" fill="#eee" stroke="#b5b5b5" stroke-width=".6"/></svg>
  <svg style="left:160.0px;top:4.4px" width="15" height="14" viewBox="0 0 15 14"><path fill="#2b7cc9" d="M4.4 .4 C5.4 1.8 9.6 1.8 10.6 .4 L14.6 2.8 L13 6.2 L11.4 5.6 V13.6 H3.6 V5.6 L2 6.2 L.4 2.8 Z"/></svg>
  <svg style="left:182.0px;top:6px" width="14" height="13" viewBox="0 0 14 13"><rect x="0" y="0" width="6" height="5.6" fill="#2b7cc9"/><rect x="7.8" y=".4" width="5" height="4.8" fill="#fff" stroke="#2b7cc9" stroke-width="1"/><rect x="0" y="7.2" width="6" height="5.6" fill="#2b7cc9"/><rect x="7.4" y="7.2" width="6" height="5.6" fill="#2b7cc9"/></svg>
</div>
<svg style="left:1712px;top:1012px" width="32" height="30" viewBox="0 0 32 30"><g transform="rotate(-13 16 15)"><rect x="3.6" y="3.2" width="24.6" height="23.4" rx="3" fill="#ee4a1b"/><text x="16" y="24.2" text-anchor="middle" font-family="Liberation Sans,sans-serif" font-weight="bold" font-style="italic" font-size="25" fill="#fff" transform="translate(16 0) scale(1.22 1) translate(-16 0)">S</text></g></svg>
</body>
</html>
